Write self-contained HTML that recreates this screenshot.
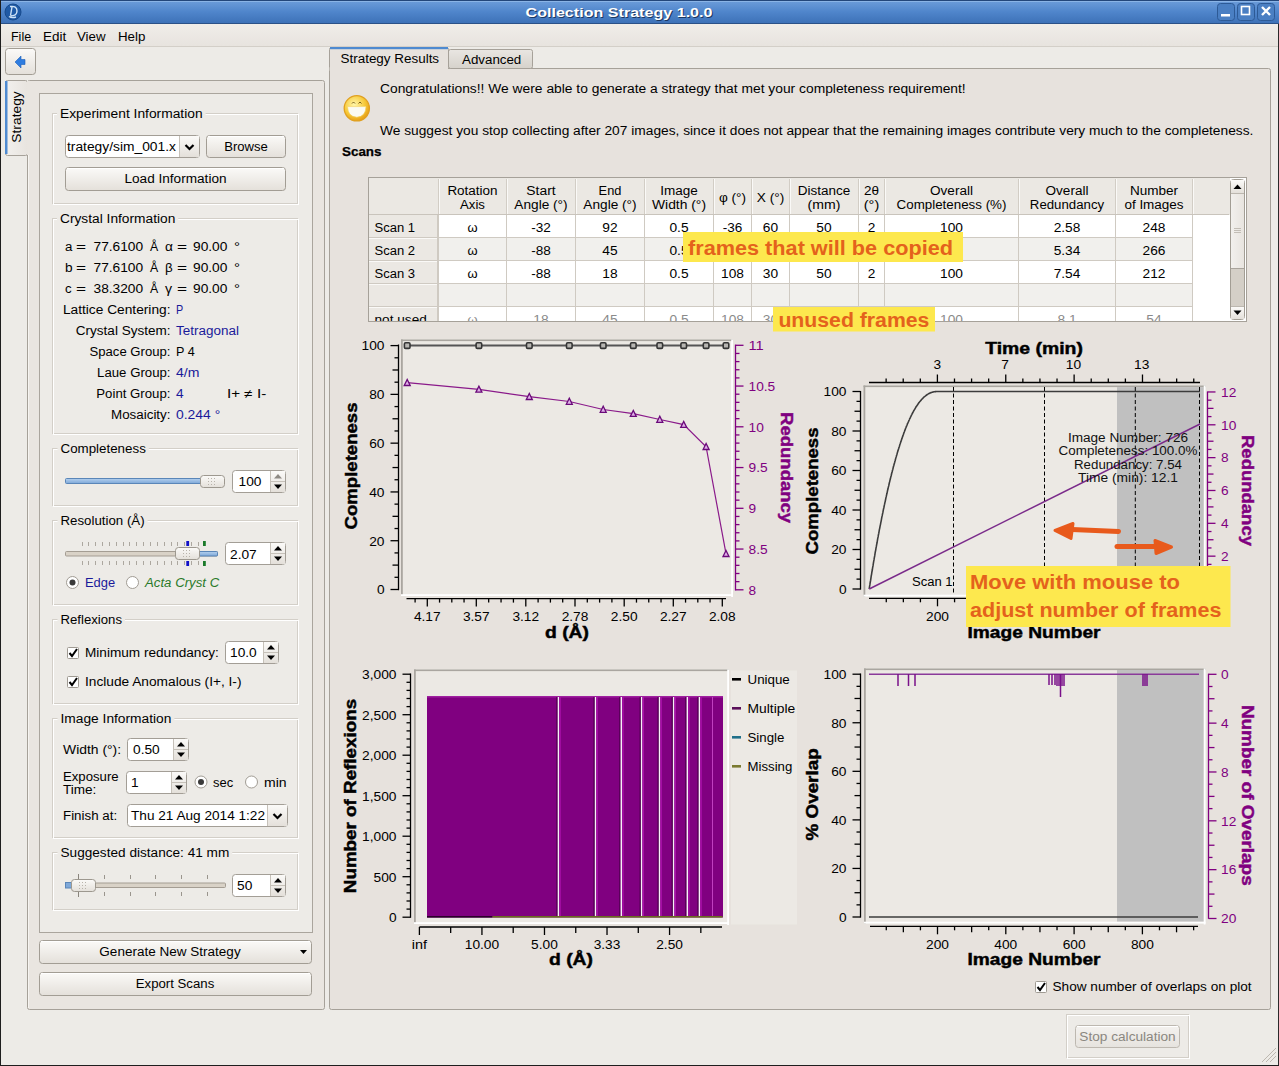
<!DOCTYPE html>
<html><head><meta charset="utf-8"><style>
html,body{margin:0;padding:0;background:#edebe7;overflow:hidden}
svg{display:block}
svg text{font-family:"Liberation Sans",sans-serif;white-space:pre}
</style></head><body>
<svg width="1279" height="1066" viewBox="0 0 1279 1066">
<defs>
<linearGradient id="gTitle" x1="0" y1="0" x2="0" y2="1"><stop offset="0" stop-color="#6e9edb"/><stop offset="0.5" stop-color="#4f85cb"/><stop offset="1" stop-color="#3c70b6"/></linearGradient>
<linearGradient id="gBtn" x1="0" y1="0" x2="0" y2="1"><stop offset="0" stop-color="#fbfaf8"/><stop offset="1" stop-color="#e4e0da"/></linearGradient>
<linearGradient id="gBtnDis" x1="0" y1="0" x2="0" y2="1"><stop offset="0" stop-color="#f4f2ef"/><stop offset="1" stop-color="#e6e3de"/></linearGradient>
<linearGradient id="gMenu" x1="0" y1="0" x2="0" y2="1"><stop offset="0" stop-color="#f0ede9"/><stop offset="1" stop-color="#e7e3de"/></linearGradient>
<linearGradient id="gTab" x1="0" y1="0" x2="0" y2="1"><stop offset="0" stop-color="#e9e6e2"/><stop offset="1" stop-color="#d6d2cb"/></linearGradient>
<linearGradient id="gTabV" x1="0" y1="0" x2="1" y2="0"><stop offset="0" stop-color="#f2f0ed"/><stop offset="1" stop-color="#e8e4df"/></linearGradient>
<linearGradient id="gBlue" x1="0" y1="0" x2="0" y2="1"><stop offset="0" stop-color="#b4d0ee"/><stop offset="1" stop-color="#7ea8d8"/></linearGradient>
<radialGradient id="gSmile" cx="0.4" cy="0.35" r="0.7"><stop offset="0" stop-color="#fff6a8"/><stop offset="0.6" stop-color="#f7c938"/><stop offset="1" stop-color="#e59a10"/></radialGradient>
</defs>
<rect x="0" y="0" width="1279" height="1066" fill="#edebe7" />
<rect x="0" y="0" width="1279" height="24" fill="url(#gTitle)" />
<line x1="0" y1="0.5" x2="1279" y2="0.5" stroke="#23467a" stroke-width="1" />
<line x1="0" y1="23.5" x2="1279" y2="23.5" stroke="#2b5187" stroke-width="1" />
<line x1="0" y1="1.5" x2="1279" y2="1.5" stroke="#8ab4e6" stroke-width="1" />
<circle cx="13" cy="12" r="8" fill="#1f5aa6" stroke="#184a8c" stroke-width="1"/>
<path d="M10 6.5 Q17 5.5 17 11 Q17 16 10.5 16 M12 7 L10.5 15.5 M9 16.5 Q12 18.5 16 17" fill="none" stroke="#cfe3f7" stroke-width="1.4"/>
<text x="620" y="18" font-size="13.50" font-weight="700" text-anchor="middle" fill="#1b3760" textLength="187" lengthAdjust="spacingAndGlyphs" >Collection Strategy 1.0.0</text>
<text x="619" y="17" font-size="13.50" font-weight="700" text-anchor="middle" fill="#ffffff" textLength="187" lengthAdjust="spacingAndGlyphs" >Collection Strategy 1.0.0</text>
<rect x="1217.5" y="3.5" width="17" height="17" fill="#4a7fc3" stroke="#2d5a96" stroke-width="1" rx="3" />
<rect x="1221" y="14" width="9" height="2.5" fill="#ffffff" />
<rect x="1237.5" y="3.5" width="17" height="17" fill="#4a7fc3" stroke="#2d5a96" stroke-width="1" rx="3" />
<rect x="1241.5" y="6.5" width="8" height="8" fill="none" stroke="#ffffff" stroke-width="1.6" />
<rect x="1257.5" y="3.5" width="17" height="17" fill="#4a7fc3" stroke="#2d5a96" stroke-width="1" rx="3" />
<path d="M1262 7 L1270 15 M1270 7 L1262 15" stroke="#ffffff" stroke-width="2.4"/>
<line x1="0.5" y1="0" x2="0.5" y2="1066" stroke="#1e1e1e" stroke-width="1" />
<line x1="1278.5" y1="24" x2="1278.5" y2="1066" stroke="#2a2a2a" stroke-width="1" />
<line x1="0" y1="1065.5" x2="1279" y2="1065.5" stroke="#1e1e1e" stroke-width="1" />
<rect x="1" y="24" width="1277" height="23" fill="url(#gMenu)" />
<line x1="1" y1="46.5" x2="1278" y2="46.5" stroke="#d3cfc8" stroke-width="1" />
<text x="11" y="41" font-size="12.48" fill="#000" textLength="20.1" lengthAdjust="spacingAndGlyphs" >File</text>
<text x="43" y="41" font-size="12.48" fill="#000" textLength="23.2" lengthAdjust="spacingAndGlyphs" >Edit</text>
<text x="77" y="41" font-size="12.48" fill="#000" textLength="28.5" lengthAdjust="spacingAndGlyphs" >View</text>
<text x="118" y="41" font-size="12.48" fill="#000" textLength="27.4" lengthAdjust="spacingAndGlyphs" >Help</text>
<rect x="5.5" y="48.5" width="30" height="26" fill="url(#gBtn)" stroke="#a29d94" stroke-width="1" rx="3" />
<path d="M15 62 L21 56 L21 59.5 L25 59.5 L25 64.5 L21 64.5 L21 68 Z" fill="#2f7de0" stroke="#1d5fb8" stroke-width="0.6"/>
<rect x="27.5" y="80.5" width="297" height="929" fill="#e9e5e0" stroke="#a6a199" stroke-width="1" rx="2" />
<line x1="28.5" y1="82" x2="28.5" y2="1008" stroke="#f6f4f1" stroke-width="1" />
<rect x="5.5" y="80.5" width="22" height="75" fill="url(#gTabV)" stroke="#a6a199" stroke-width="1" rx="2" />
<rect x="27" y="81" width="2" height="74" fill="#e9e5e0" />
<rect x="5" y="81" width="2.5" height="73" fill="#4e8ad0" />
<text x="21" y="117" font-size="12.48" text-anchor="middle" fill="#000" textLength="51.4" lengthAdjust="spacingAndGlyphs" transform="rotate(-90 21 117)" >Strategy</text>
<rect x="39.5" y="93.5" width="273" height="839" fill="#edebe7" stroke="#aaa59d" stroke-width="1" />
<rect x="52.5" y="113.5" width="245" height="90" fill="none" stroke="#d3cfc8" stroke-width="1" />
<rect x="53.5" y="114.5" width="245" height="90" fill="none" stroke="#ffffff" stroke-width="1" />
<rect x="57" y="111" width="148.6" height="5" fill="#edebe7"/>
<text x="60" y="118" font-size="12.48" fill="#000" textLength="142.6" lengthAdjust="spacingAndGlyphs" >Experiment Information</text>
<rect x="65.5" y="135.5" width="134" height="22" fill="#ffffff" stroke="#a39e96" stroke-width="1" rx="3" />
<rect x="179.5" y="136" width="19.5" height="21" fill="url(#gBtn)" />
<line x1="179.5" y1="136" x2="179.5" y2="157" stroke="#c6c1b9" stroke-width="1" />
<path d="M185.5 145.0 L189.5 149.0 L193.5 145.0" fill="none" stroke="#000" stroke-width="2.2"/>
<text x="67" y="151" font-size="12.48" fill="#000" textLength="108.9" lengthAdjust="spacingAndGlyphs" >trategy/sim_001.x</text>
<rect x="206.5" y="135.5" width="79" height="22" fill="url(#gBtn)" stroke="#a29d94" stroke-width="1" rx="3" />
<line x1="208" y1="136.5" x2="284" y2="136.5" stroke="#ffffff" stroke-width="1" />
<text x="246.0" y="151" font-size="12.48" text-anchor="middle" fill="#000" textLength="43.7" lengthAdjust="spacingAndGlyphs" >Browse</text>
<rect x="65.5" y="167.5" width="220" height="23" fill="url(#gBtn)" stroke="#a29d94" stroke-width="1" rx="3" />
<line x1="67" y1="168.5" x2="284" y2="168.5" stroke="#ffffff" stroke-width="1" />
<text x="175.5" y="183" font-size="12.48" text-anchor="middle" fill="#000" textLength="102.1" lengthAdjust="spacingAndGlyphs" >Load Information</text>
<rect x="52.5" y="218.5" width="245" height="215" fill="none" stroke="#d3cfc8" stroke-width="1" />
<rect x="53.5" y="219.5" width="245" height="215" fill="none" stroke="#ffffff" stroke-width="1" />
<rect x="57" y="216" width="121.3" height="5" fill="#edebe7"/>
<text x="60" y="222.5" font-size="12.48" fill="#000" textLength="115.3" lengthAdjust="spacingAndGlyphs" >Crystal Information</text>
<text x="65" y="250.5" font-size="12.48" fill="#000" textLength="7.4" lengthAdjust="spacingAndGlyphs" >a</text>
<text x="76" y="250.5" font-size="12.48" fill="#000" textLength="10.1" lengthAdjust="spacingAndGlyphs" >=</text>
<text x="93.5" y="250.5" font-size="12.48" fill="#000" textLength="49.6" lengthAdjust="spacingAndGlyphs" >77.6100</text>
<text x="150" y="250.5" font-size="12.48" fill="#000" textLength="8.2" lengthAdjust="spacingAndGlyphs" >Å</text>
<text x="165" y="250.5" font-size="12.48" fill="#000" textLength="7.9" lengthAdjust="spacingAndGlyphs" >α</text>
<text x="177" y="250.5" font-size="12.48" fill="#000" textLength="10.1" lengthAdjust="spacingAndGlyphs" >=</text>
<text x="193" y="250.5" font-size="12.48" fill="#000" textLength="34.4" lengthAdjust="spacingAndGlyphs" >90.00</text>
<text x="234" y="250.5" font-size="12.48" fill="#000" textLength="6.0" lengthAdjust="spacingAndGlyphs" >°</text>
<text x="65" y="271.5" font-size="12.48" fill="#000" textLength="7.6" lengthAdjust="spacingAndGlyphs" >b</text>
<text x="76" y="271.5" font-size="12.48" fill="#000" textLength="10.1" lengthAdjust="spacingAndGlyphs" >=</text>
<text x="93.5" y="271.5" font-size="12.48" fill="#000" textLength="49.6" lengthAdjust="spacingAndGlyphs" >77.6100</text>
<text x="150" y="271.5" font-size="12.48" fill="#000" textLength="8.2" lengthAdjust="spacingAndGlyphs" >Å</text>
<text x="165" y="271.5" font-size="12.48" fill="#000" textLength="7.7" lengthAdjust="spacingAndGlyphs" >β</text>
<text x="177" y="271.5" font-size="12.48" fill="#000" textLength="10.1" lengthAdjust="spacingAndGlyphs" >=</text>
<text x="193" y="271.5" font-size="12.48" fill="#000" textLength="34.4" lengthAdjust="spacingAndGlyphs" >90.00</text>
<text x="234" y="271.5" font-size="12.48" fill="#000" textLength="6.0" lengthAdjust="spacingAndGlyphs" >°</text>
<text x="65" y="292.5" font-size="12.48" fill="#000" textLength="6.6" lengthAdjust="spacingAndGlyphs" >c</text>
<text x="76" y="292.5" font-size="12.48" fill="#000" textLength="10.1" lengthAdjust="spacingAndGlyphs" >=</text>
<text x="93.5" y="292.5" font-size="12.48" fill="#000" textLength="49.6" lengthAdjust="spacingAndGlyphs" >38.3200</text>
<text x="150" y="292.5" font-size="12.48" fill="#000" textLength="8.2" lengthAdjust="spacingAndGlyphs" >Å</text>
<text x="165" y="292.5" font-size="12.48" fill="#000" textLength="7.1" lengthAdjust="spacingAndGlyphs" >γ</text>
<text x="177" y="292.5" font-size="12.48" fill="#000" textLength="10.1" lengthAdjust="spacingAndGlyphs" >=</text>
<text x="193" y="292.5" font-size="12.48" fill="#000" textLength="34.4" lengthAdjust="spacingAndGlyphs" >90.00</text>
<text x="234" y="292.5" font-size="12.48" fill="#000" textLength="6.0" lengthAdjust="spacingAndGlyphs" >°</text>
<text x="170.5" y="313.5" font-size="12.48" text-anchor="end" fill="#000" textLength="107.6" lengthAdjust="spacingAndGlyphs" >Lattice Centering:</text>
<text x="176" y="313.5" font-size="12.48" fill="#1a1a9a" textLength="7.2" lengthAdjust="spacingAndGlyphs" >P</text>
<text x="170.5" y="334.5" font-size="12.48" text-anchor="end" fill="#000" textLength="94.7" lengthAdjust="spacingAndGlyphs" >Crystal System:</text>
<text x="176" y="334.5" font-size="12.48" fill="#1a1a9a" textLength="62.9" lengthAdjust="spacingAndGlyphs" >Tetragonal</text>
<text x="170.5" y="355.5" font-size="12.48" text-anchor="end" fill="#000" textLength="81.0" lengthAdjust="spacingAndGlyphs" >Space Group:</text>
<text x="176" y="355.5" font-size="12.48" fill="#000" textLength="18.7" lengthAdjust="spacingAndGlyphs" >P 4</text>
<text x="170.5" y="376.5" font-size="12.48" text-anchor="end" fill="#000" textLength="73.4" lengthAdjust="spacingAndGlyphs" >Laue Group:</text>
<text x="176" y="376.5" font-size="12.48" fill="#1a1a9a" textLength="23.4" lengthAdjust="spacingAndGlyphs" >4/m</text>
<text x="170.5" y="397.5" font-size="12.48" text-anchor="end" fill="#000" textLength="74.2" lengthAdjust="spacingAndGlyphs" >Point Group:</text>
<text x="176" y="397.5" font-size="12.48" fill="#1a1a9a" textLength="7.6" lengthAdjust="spacingAndGlyphs" >4</text>
<text x="170.5" y="418.5" font-size="12.48" text-anchor="end" fill="#000" textLength="59.5" lengthAdjust="spacingAndGlyphs" >Mosaicity:</text>
<text x="176" y="418.5" font-size="12.48" fill="#1a1a9a" textLength="44.2" lengthAdjust="spacingAndGlyphs" >0.244 °</text>
<text x="227" y="397.5" font-size="12.48" fill="#000" textLength="39.2" lengthAdjust="spacingAndGlyphs" >I+ ≠ I-</text>
<rect x="52.5" y="448.5" width="245" height="57" fill="none" stroke="#d3cfc8" stroke-width="1" />
<rect x="53.5" y="449.5" width="245" height="57" fill="none" stroke="#ffffff" stroke-width="1" />
<rect x="57.5" y="446" width="91.3" height="5" fill="#edebe7"/>
<text x="60.5" y="452.7" font-size="12.48" fill="#000" textLength="85.3" lengthAdjust="spacingAndGlyphs" >Completeness</text>
<rect x="65.5" y="478.5" width="158" height="5" fill="url(#gBlue)" stroke="#5a86b8" stroke-width="1" rx="1" />
<rect x="200.5" y="475.5" width="24" height="12" fill="url(#gBtn)" stroke="#9d988f" stroke-width="1" rx="3" />
<g fill="#b8b3ab"><rect x="208" y="478" width="1" height="1"/><rect x="208" y="481" width="1" height="1"/><rect x="208" y="484" width="1" height="1"/><rect x="211" y="478" width="1" height="1"/><rect x="211" y="481" width="1" height="1"/><rect x="211" y="484" width="1" height="1"/><rect x="214" y="478" width="1" height="1"/><rect x="214" y="481" width="1" height="1"/><rect x="214" y="484" width="1" height="1"/></g>
<rect x="232.5" y="470.5" width="53" height="22" fill="#ffffff" stroke="#a39e96" stroke-width="1" rx="3" />
<rect x="270.5" y="471" width="14.5" height="21" fill="url(#gBtn)" />
<line x1="270.5" y1="471" x2="270.5" y2="492" stroke="#c6c1b9" stroke-width="1" />
<line x1="271" y1="481.5" x2="285" y2="481.5" stroke="#c6c1b9" stroke-width="1" />
<path d="M274.0 478.5 L282.0 478.5 L278.0 474.0 Z" fill="#8e8a84"/>
<path d="M274.0 484.5 L282.0 484.5 L278.0 489.0 Z" fill="#000"/>
<text x="238.5" y="486" font-size="12.48" fill="#000" textLength="22.9" lengthAdjust="spacingAndGlyphs" >100</text>
<rect x="52.5" y="520.5" width="245" height="84" fill="none" stroke="#d3cfc8" stroke-width="1" />
<rect x="53.5" y="521.5" width="245" height="84" fill="none" stroke="#ffffff" stroke-width="1" />
<rect x="57.5" y="518" width="90.1" height="5" fill="#edebe7"/>
<text x="60.5" y="524.5" font-size="12.48" fill="#000" textLength="84.1" lengthAdjust="spacingAndGlyphs" >Resolution (Å)</text>
<line x1="82.5" y1="542" x2="82.5" y2="546" stroke="#aca79f" stroke-width="1" />
<line x1="82.5" y1="561" x2="82.5" y2="565" stroke="#aca79f" stroke-width="1" />
<line x1="88.5" y1="542" x2="88.5" y2="546" stroke="#aca79f" stroke-width="1" />
<line x1="88.5" y1="561" x2="88.5" y2="565" stroke="#aca79f" stroke-width="1" />
<line x1="95.5" y1="542" x2="95.5" y2="546" stroke="#aca79f" stroke-width="1" />
<line x1="95.5" y1="561" x2="95.5" y2="565" stroke="#aca79f" stroke-width="1" />
<line x1="102.5" y1="542" x2="102.5" y2="546" stroke="#aca79f" stroke-width="1" />
<line x1="102.5" y1="561" x2="102.5" y2="565" stroke="#aca79f" stroke-width="1" />
<line x1="109.5" y1="542" x2="109.5" y2="546" stroke="#aca79f" stroke-width="1" />
<line x1="109.5" y1="561" x2="109.5" y2="565" stroke="#aca79f" stroke-width="1" />
<line x1="116.5" y1="542" x2="116.5" y2="546" stroke="#aca79f" stroke-width="1" />
<line x1="116.5" y1="561" x2="116.5" y2="565" stroke="#aca79f" stroke-width="1" />
<line x1="123.5" y1="542" x2="123.5" y2="546" stroke="#aca79f" stroke-width="1" />
<line x1="123.5" y1="561" x2="123.5" y2="565" stroke="#aca79f" stroke-width="1" />
<line x1="129.5" y1="542" x2="129.5" y2="546" stroke="#aca79f" stroke-width="1" />
<line x1="129.5" y1="561" x2="129.5" y2="565" stroke="#aca79f" stroke-width="1" />
<line x1="136.5" y1="542" x2="136.5" y2="546" stroke="#aca79f" stroke-width="1" />
<line x1="136.5" y1="561" x2="136.5" y2="565" stroke="#aca79f" stroke-width="1" />
<line x1="143.5" y1="542" x2="143.5" y2="546" stroke="#aca79f" stroke-width="1" />
<line x1="143.5" y1="561" x2="143.5" y2="565" stroke="#aca79f" stroke-width="1" />
<line x1="150.5" y1="542" x2="150.5" y2="546" stroke="#aca79f" stroke-width="1" />
<line x1="150.5" y1="561" x2="150.5" y2="565" stroke="#aca79f" stroke-width="1" />
<line x1="157.5" y1="542" x2="157.5" y2="546" stroke="#aca79f" stroke-width="1" />
<line x1="157.5" y1="561" x2="157.5" y2="565" stroke="#aca79f" stroke-width="1" />
<line x1="164.5" y1="542" x2="164.5" y2="546" stroke="#aca79f" stroke-width="1" />
<line x1="164.5" y1="561" x2="164.5" y2="565" stroke="#aca79f" stroke-width="1" />
<line x1="171.5" y1="542" x2="171.5" y2="546" stroke="#aca79f" stroke-width="1" />
<line x1="171.5" y1="561" x2="171.5" y2="565" stroke="#aca79f" stroke-width="1" />
<line x1="177.5" y1="542" x2="177.5" y2="546" stroke="#aca79f" stroke-width="1" />
<line x1="177.5" y1="561" x2="177.5" y2="565" stroke="#aca79f" stroke-width="1" />
<line x1="184.5" y1="542" x2="184.5" y2="546" stroke="#aca79f" stroke-width="1" />
<line x1="184.5" y1="561" x2="184.5" y2="565" stroke="#aca79f" stroke-width="1" />
<line x1="191.5" y1="542" x2="191.5" y2="546" stroke="#aca79f" stroke-width="1" />
<line x1="191.5" y1="561" x2="191.5" y2="565" stroke="#aca79f" stroke-width="1" />
<line x1="198.5" y1="542" x2="198.5" y2="546" stroke="#aca79f" stroke-width="1" />
<line x1="198.5" y1="561" x2="198.5" y2="565" stroke="#aca79f" stroke-width="1" />
<rect x="65.5" y="551.5" width="152" height="4.5" fill="#d9d2c7" stroke="#a49d93" stroke-width="1" rx="1" />
<rect x="196" y="551.5" width="21.5" height="4.5" fill="url(#gBlue)" stroke="#5a86b8" stroke-width="1" rx="1" />
<rect x="186.3" y="541" width="2.8" height="5" fill="#1010c8" />
<rect x="186.3" y="561" width="2.8" height="5" fill="#1010c8" />
<rect x="203" y="541" width="2.8" height="5" fill="#1a7a2a" />
<rect x="203" y="561" width="2.8" height="5" fill="#1a7a2a" />
<rect x="175.5" y="547.5" width="24" height="12" fill="url(#gBtn)" stroke="#9d988f" stroke-width="1" rx="3" />
<g fill="#b8b3ab"><rect x="183" y="550" width="1" height="1"/><rect x="183" y="553" width="1" height="1"/><rect x="183" y="556" width="1" height="1"/><rect x="186" y="550" width="1" height="1"/><rect x="186" y="553" width="1" height="1"/><rect x="186" y="556" width="1" height="1"/><rect x="189" y="550" width="1" height="1"/><rect x="189" y="553" width="1" height="1"/><rect x="189" y="556" width="1" height="1"/></g>
<rect x="225.5" y="542.5" width="60" height="22" fill="#ffffff" stroke="#a39e96" stroke-width="1" rx="3" />
<rect x="270.5" y="543" width="14.5" height="21" fill="url(#gBtn)" />
<line x1="270.5" y1="543" x2="270.5" y2="564" stroke="#c6c1b9" stroke-width="1" />
<line x1="271" y1="553.5" x2="285" y2="553.5" stroke="#c6c1b9" stroke-width="1" />
<path d="M274.0 550.5 L282.0 550.5 L278.0 546.0 Z" fill="#000"/>
<path d="M274.0 556.5 L282.0 556.5 L278.0 561.0 Z" fill="#000"/>
<text x="230" y="558.5" font-size="12.48" fill="#000" textLength="26.7" lengthAdjust="spacingAndGlyphs" >2.07</text>
<circle cx="72.5" cy="582.5" r="6" fill="#ffffff" stroke="#a19c94" stroke-width="1"/>
<circle cx="72.5" cy="582.5" r="3" fill="#3a3a3a"/>
<text x="85" y="587" font-size="12.48" fill="#1a1a9a" textLength="30.2" lengthAdjust="spacingAndGlyphs" >Edge</text>
<circle cx="132.5" cy="582.5" r="6" fill="#ffffff" stroke="#a19c94" stroke-width="1"/>
<text x="145" y="587" font-size="12.48" font-style="italic" fill="#2a7a2a" textLength="74.2" lengthAdjust="spacingAndGlyphs" >Acta Cryst C</text>
<rect x="52.5" y="619.5" width="245" height="84" fill="none" stroke="#d3cfc8" stroke-width="1" />
<rect x="53.5" y="620.5" width="245" height="84" fill="none" stroke="#ffffff" stroke-width="1" />
<rect x="57.5" y="617" width="67.5" height="5" fill="#edebe7"/>
<text x="60.5" y="623.5" font-size="12.48" fill="#000" textLength="61.5" lengthAdjust="spacingAndGlyphs" >Reflexions</text>
<rect x="67.5" y="647.5" width="11" height="11" fill="#ffffff" stroke="#9f9a92" stroke-width="1" rx="1" />
<path d="M69.5 653 L72 656 L77 649" fill="none" stroke="#000" stroke-width="2"/>
<text x="85" y="657" font-size="12.48" fill="#000" textLength="133.8" lengthAdjust="spacingAndGlyphs" >Minimum redundancy:</text>
<rect x="225.5" y="641.5" width="53" height="22" fill="#ffffff" stroke="#a39e96" stroke-width="1" rx="3" />
<rect x="263.5" y="642" width="14.5" height="21" fill="url(#gBtn)" />
<line x1="263.5" y1="642" x2="263.5" y2="663" stroke="#c6c1b9" stroke-width="1" />
<line x1="264" y1="652.5" x2="278" y2="652.5" stroke="#c6c1b9" stroke-width="1" />
<path d="M267.0 649.5 L275.0 649.5 L271.0 645.0 Z" fill="#000"/>
<path d="M267.0 655.5 L275.0 655.5 L271.0 660.0 Z" fill="#000"/>
<text x="230" y="657" font-size="12.48" fill="#000" textLength="26.7" lengthAdjust="spacingAndGlyphs" >10.0</text>
<rect x="67.5" y="676.5" width="11" height="11" fill="#ffffff" stroke="#9f9a92" stroke-width="1" rx="1" />
<path d="M69.5 682 L72 685 L77 678" fill="none" stroke="#000" stroke-width="2"/>
<text x="85" y="686" font-size="12.48" fill="#000" textLength="156.5" lengthAdjust="spacingAndGlyphs" >Include Anomalous (I+, I-)</text>
<rect x="52.5" y="718.5" width="245" height="119" fill="none" stroke="#d3cfc8" stroke-width="1" />
<rect x="53.5" y="719.5" width="245" height="119" fill="none" stroke="#ffffff" stroke-width="1" />
<rect x="57.5" y="716" width="116.9" height="5" fill="#edebe7"/>
<text x="60.5" y="722.5" font-size="12.48" fill="#000" textLength="110.9" lengthAdjust="spacingAndGlyphs" >Image Information</text>
<text x="63" y="753.5" font-size="12.48" fill="#000" textLength="58.1" lengthAdjust="spacingAndGlyphs" >Width (°):</text>
<rect x="127.5" y="738.5" width="61" height="22" fill="#ffffff" stroke="#a39e96" stroke-width="1" rx="3" />
<rect x="173.5" y="739" width="14.5" height="21" fill="url(#gBtn)" />
<line x1="173.5" y1="739" x2="173.5" y2="760" stroke="#c6c1b9" stroke-width="1" />
<line x1="174" y1="749.5" x2="188" y2="749.5" stroke="#c6c1b9" stroke-width="1" />
<path d="M177.0 746.5 L185.0 746.5 L181.0 742.0 Z" fill="#000"/>
<path d="M177.0 752.5 L185.0 752.5 L181.0 757.0 Z" fill="#000"/>
<text x="133" y="754" font-size="12.48" fill="#000" textLength="26.7" lengthAdjust="spacingAndGlyphs" >0.50</text>
<text x="63" y="780.5" font-size="12.48" fill="#000" textLength="55.6" lengthAdjust="spacingAndGlyphs" >Exposure</text>
<text x="63" y="793.5" font-size="12.48" fill="#000" textLength="33.4" lengthAdjust="spacingAndGlyphs" >Time:</text>
<rect x="126.5" y="771.5" width="60" height="22" fill="#ffffff" stroke="#a39e96" stroke-width="1" rx="3" />
<rect x="171.5" y="772" width="14.5" height="21" fill="url(#gBtn)" />
<line x1="171.5" y1="772" x2="171.5" y2="793" stroke="#c6c1b9" stroke-width="1" />
<line x1="172" y1="782.5" x2="186" y2="782.5" stroke="#c6c1b9" stroke-width="1" />
<path d="M175.0 779.5 L183.0 779.5 L179.0 775.0 Z" fill="#000"/>
<path d="M175.0 785.5 L183.0 785.5 L179.0 790.0 Z" fill="#000"/>
<text x="131" y="787" font-size="12.48" fill="#000" textLength="7.6" lengthAdjust="spacingAndGlyphs" >1</text>
<circle cx="201" cy="782" r="6" fill="#ffffff" stroke="#a19c94" stroke-width="1"/>
<circle cx="201" cy="782" r="3" fill="#3a3a3a"/>
<text x="213" y="787" font-size="12.48" fill="#000" textLength="20.2" lengthAdjust="spacingAndGlyphs" >sec</text>
<circle cx="251.5" cy="782" r="6" fill="#ffffff" stroke="#a19c94" stroke-width="1"/>
<text x="264" y="787" font-size="12.48" fill="#000" textLength="22.6" lengthAdjust="spacingAndGlyphs" >min</text>
<text x="63" y="819.5" font-size="12.48" fill="#000" textLength="54.1" lengthAdjust="spacingAndGlyphs" >Finish at:</text>
<rect x="127.5" y="804.5" width="160" height="22" fill="#ffffff" stroke="#a39e96" stroke-width="1" rx="3" />
<rect x="267.5" y="805" width="19.5" height="21" fill="url(#gBtn)" />
<line x1="267.5" y1="805" x2="267.5" y2="826" stroke="#c6c1b9" stroke-width="1" />
<path d="M273.5 814.0 L277.5 818.0 L281.5 814.0" fill="none" stroke="#000" stroke-width="2.2"/>
<text x="131" y="820" font-size="12.48" fill="#000" textLength="134.0" lengthAdjust="spacingAndGlyphs" >Thu 21 Aug 2014 1:22</text>
<rect x="52.5" y="852.5" width="245" height="57" fill="none" stroke="#d3cfc8" stroke-width="1" />
<rect x="53.5" y="853.5" width="245" height="57" fill="none" stroke="#ffffff" stroke-width="1" />
<rect x="57.5" y="850" width="174.8" height="5" fill="#edebe7"/>
<text x="60.5" y="857" font-size="12.48" fill="#000" textLength="168.8" lengthAdjust="spacingAndGlyphs" >Suggested distance: 41 mm</text>
<line x1="104.5" y1="875" x2="104.5" y2="879" stroke="#9a958d" stroke-width="1" />
<line x1="104.5" y1="892" x2="104.5" y2="896" stroke="#9a958d" stroke-width="1" />
<line x1="130.5" y1="875" x2="130.5" y2="879" stroke="#9a958d" stroke-width="1" />
<line x1="130.5" y1="892" x2="130.5" y2="896" stroke="#9a958d" stroke-width="1" />
<line x1="155.5" y1="875" x2="155.5" y2="879" stroke="#9a958d" stroke-width="1" />
<line x1="155.5" y1="892" x2="155.5" y2="896" stroke="#9a958d" stroke-width="1" />
<line x1="181.5" y1="875" x2="181.5" y2="879" stroke="#9a958d" stroke-width="1" />
<line x1="181.5" y1="892" x2="181.5" y2="896" stroke="#9a958d" stroke-width="1" />
<line x1="207.5" y1="875" x2="207.5" y2="879" stroke="#9a958d" stroke-width="1" />
<line x1="207.5" y1="892" x2="207.5" y2="896" stroke="#9a958d" stroke-width="1" />
<line x1="78.5" y1="874" x2="78.5" y2="897" stroke="#8a857d" stroke-width="1" />
<rect x="65.5" y="883" width="160" height="4.5" fill="#d9d2c7" stroke="#a49d93" stroke-width="1" rx="1" />
<rect x="65.5" y="882.5" width="8" height="5.5" fill="#7ea8d8" stroke="#5a86b8" stroke-width="1" />
<rect x="71.5" y="879.5" width="24" height="12" fill="url(#gBtn)" stroke="#9d988f" stroke-width="1" rx="3" />
<g fill="#b8b3ab"><rect x="79" y="882" width="1" height="1"/><rect x="79" y="885" width="1" height="1"/><rect x="79" y="888" width="1" height="1"/><rect x="82" y="882" width="1" height="1"/><rect x="82" y="885" width="1" height="1"/><rect x="82" y="888" width="1" height="1"/><rect x="85" y="882" width="1" height="1"/><rect x="85" y="885" width="1" height="1"/><rect x="85" y="888" width="1" height="1"/></g>
<rect x="232.5" y="874.5" width="53" height="22" fill="#ffffff" stroke="#a39e96" stroke-width="1" rx="3" />
<rect x="270.5" y="875" width="14.5" height="21" fill="url(#gBtn)" />
<line x1="270.5" y1="875" x2="270.5" y2="896" stroke="#c6c1b9" stroke-width="1" />
<line x1="271" y1="885.5" x2="285" y2="885.5" stroke="#c6c1b9" stroke-width="1" />
<path d="M274.0 882.5 L282.0 882.5 L278.0 878.0 Z" fill="#000"/>
<path d="M274.0 888.5 L282.0 888.5 L278.0 893.0 Z" fill="#000"/>
<text x="237" y="890" font-size="12.48" fill="#000" textLength="15.3" lengthAdjust="spacingAndGlyphs" >50</text>
<line x1="39" y1="932.5" x2="313" y2="932.5" stroke="#aaa59d" stroke-width="1" />
<rect x="39.5" y="940.5" width="272" height="23" fill="url(#gBtn)" stroke="#a29d94" stroke-width="1" rx="3" />
<line x1="41" y1="941.5" x2="310" y2="941.5" stroke="#ffffff" stroke-width="1" />
<text x="170" y="956" font-size="12.48" text-anchor="middle" fill="#000" textLength="141.3" lengthAdjust="spacingAndGlyphs" >Generate New Strategy</text>
<path d="M300 950 L307 950 L303.5 954 Z" fill="#000"/>
<rect x="39.5" y="972.5" width="272" height="23" fill="url(#gBtn)" stroke="#a29d94" stroke-width="1" rx="3" />
<line x1="41" y1="973.5" x2="310" y2="973.5" stroke="#ffffff" stroke-width="1" />
<text x="175" y="988" font-size="12.48" text-anchor="middle" fill="#000" textLength="78.5" lengthAdjust="spacingAndGlyphs" >Export Scans</text>
<rect x="329.5" y="68.5" width="941" height="941" fill="#e7e2dd" stroke="#a6a199" stroke-width="1" rx="2" />
<rect x="448.5" y="49.5" width="84" height="19" fill="url(#gTab)" stroke="#a6a199" stroke-width="1" rx="2" />
<text x="462" y="63.5" font-size="12.48" fill="#000" textLength="59.3" lengthAdjust="spacingAndGlyphs" >Advanced</text>
<rect x="329.5" y="47.5" width="119" height="22" fill="#e7e2dd" stroke="#a6a199" stroke-width="1" rx="2" />
<rect x="330" y="60" width="118" height="10" fill="#e7e2dd" />
<rect x="330" y="47" width="118" height="2.2" fill="#4e8ad0" />
<text x="340.5" y="63" font-size="12.48" fill="#000" textLength="98.6" lengthAdjust="spacingAndGlyphs" >Strategy Results</text>
<circle cx="356.8" cy="108.3" r="12.6" fill="url(#gSmile)" stroke="#e0a020" stroke-width="1.3"/>
<path d="M347.5 106.6 L366 106.6 Q365.5 117 356.8 117.2 Q348 117 347.5 106.6 Z" fill="#fbfbf2" stroke="#f4d060" stroke-width="0.6"/>
<path d="M352 103.5 L353.5 102 L355 103.5 M358.5 103.5 L360 102 L361.5 103.5" fill="none" stroke="#6a5010" stroke-width="0.9"/>
<text x="380" y="93" font-size="12.48" fill="#000" textLength="585.7" lengthAdjust="spacingAndGlyphs" >Congratulations!! We were able to generate a strategy that met your completeness requirement!</text>
<text x="380" y="135" font-size="12.48" fill="#000" textLength="873.4" lengthAdjust="spacingAndGlyphs" >We suggest you stop collecting after 207 images, since it does not appear that the remaining images contribute very much to the completeness.</text>
<text stroke="#000" stroke-width="0.25" x="342" y="155.5" font-size="12.48" font-weight="700" fill="#000" textLength="39.5" lengthAdjust="spacingAndGlyphs" >Scans</text>
<rect x="368.5" y="177.5" width="878" height="144" fill="#ffffff" stroke="#a6a199" stroke-width="1" />
<rect x="369" y="178" width="861" height="37" fill="#ebe8e3" />
<rect x="438" y="215" width="754" height="23" fill="#ffffff" />
<rect x="369" y="215" width="69" height="23" fill="#ebe8e3" />
<rect x="438" y="238" width="754" height="23" fill="#f1f0ed" />
<rect x="369" y="238" width="69" height="23" fill="#ebe8e3" />
<rect x="438" y="261" width="754" height="23" fill="#ffffff" />
<rect x="369" y="261" width="69" height="23" fill="#ebe8e3" />
<rect x="438" y="284" width="754" height="23" fill="#f1f0ed" />
<rect x="369" y="284" width="69" height="23" fill="#ebe8e3" />
<rect x="438" y="307" width="754" height="14" fill="#ffffff" />
<rect x="369" y="307" width="69" height="14" fill="#ebe8e3" />
<line x1="438.5" y1="179" x2="438.5" y2="214" stroke="#d2cdc5" stroke-width="1" />
<line x1="439.5" y1="179" x2="439.5" y2="214" stroke="#faf9f7" stroke-width="1" />
<line x1="506.5" y1="179" x2="506.5" y2="214" stroke="#d2cdc5" stroke-width="1" />
<line x1="507.5" y1="179" x2="507.5" y2="214" stroke="#faf9f7" stroke-width="1" />
<line x1="575.5" y1="179" x2="575.5" y2="214" stroke="#d2cdc5" stroke-width="1" />
<line x1="576.5" y1="179" x2="576.5" y2="214" stroke="#faf9f7" stroke-width="1" />
<line x1="644.5" y1="179" x2="644.5" y2="214" stroke="#d2cdc5" stroke-width="1" />
<line x1="645.5" y1="179" x2="645.5" y2="214" stroke="#faf9f7" stroke-width="1" />
<line x1="713.5" y1="179" x2="713.5" y2="214" stroke="#d2cdc5" stroke-width="1" />
<line x1="714.5" y1="179" x2="714.5" y2="214" stroke="#faf9f7" stroke-width="1" />
<line x1="751.5" y1="179" x2="751.5" y2="214" stroke="#d2cdc5" stroke-width="1" />
<line x1="752.5" y1="179" x2="752.5" y2="214" stroke="#faf9f7" stroke-width="1" />
<line x1="789.5" y1="179" x2="789.5" y2="214" stroke="#d2cdc5" stroke-width="1" />
<line x1="790.5" y1="179" x2="790.5" y2="214" stroke="#faf9f7" stroke-width="1" />
<line x1="858.5" y1="179" x2="858.5" y2="214" stroke="#d2cdc5" stroke-width="1" />
<line x1="859.5" y1="179" x2="859.5" y2="214" stroke="#faf9f7" stroke-width="1" />
<line x1="884.5" y1="179" x2="884.5" y2="214" stroke="#d2cdc5" stroke-width="1" />
<line x1="885.5" y1="179" x2="885.5" y2="214" stroke="#faf9f7" stroke-width="1" />
<line x1="1018.5" y1="179" x2="1018.5" y2="214" stroke="#d2cdc5" stroke-width="1" />
<line x1="1019.5" y1="179" x2="1019.5" y2="214" stroke="#faf9f7" stroke-width="1" />
<line x1="1115.5" y1="179" x2="1115.5" y2="214" stroke="#d2cdc5" stroke-width="1" />
<line x1="1116.5" y1="179" x2="1116.5" y2="214" stroke="#faf9f7" stroke-width="1" />
<line x1="1192.5" y1="179" x2="1192.5" y2="214" stroke="#d2cdc5" stroke-width="1" />
<line x1="1193.5" y1="179" x2="1193.5" y2="214" stroke="#faf9f7" stroke-width="1" />
<line x1="369" y1="214.5" x2="1229" y2="214.5" stroke="#c9c4bc" stroke-width="1" />
<line x1="369" y1="237.5" x2="438" y2="237.5" stroke="#cfcac2" stroke-width="1" />
<line x1="369" y1="238.5" x2="438" y2="238.5" stroke="#faf9f7" stroke-width="1" />
<line x1="369" y1="260.5" x2="438" y2="260.5" stroke="#cfcac2" stroke-width="1" />
<line x1="369" y1="261.5" x2="438" y2="261.5" stroke="#faf9f7" stroke-width="1" />
<line x1="369" y1="283.5" x2="438" y2="283.5" stroke="#cfcac2" stroke-width="1" />
<line x1="369" y1="284.5" x2="438" y2="284.5" stroke="#faf9f7" stroke-width="1" />
<line x1="369" y1="306.5" x2="438" y2="306.5" stroke="#cfcac2" stroke-width="1" />
<line x1="369" y1="307.5" x2="438" y2="307.5" stroke="#faf9f7" stroke-width="1" />
<line x1="437.5" y1="215" x2="437.5" y2="321" stroke="#cfcac2" stroke-width="1" />
<line x1="438" y1="237.5" x2="1192" y2="237.5" stroke="#cfcac2" stroke-width="1" />
<line x1="438" y1="260.5" x2="1192" y2="260.5" stroke="#cfcac2" stroke-width="1" />
<line x1="438" y1="283.5" x2="1192" y2="283.5" stroke="#cfcac2" stroke-width="1" />
<line x1="438" y1="306.5" x2="1192" y2="306.5" stroke="#cfcac2" stroke-width="1" />
<line x1="438.5" y1="215" x2="438.5" y2="321" stroke="#cfcac2" stroke-width="1" />
<line x1="506.5" y1="215" x2="506.5" y2="321" stroke="#cfcac2" stroke-width="1" />
<line x1="575.5" y1="215" x2="575.5" y2="321" stroke="#cfcac2" stroke-width="1" />
<line x1="644.5" y1="215" x2="644.5" y2="321" stroke="#cfcac2" stroke-width="1" />
<line x1="713.5" y1="215" x2="713.5" y2="321" stroke="#cfcac2" stroke-width="1" />
<line x1="751.5" y1="215" x2="751.5" y2="321" stroke="#cfcac2" stroke-width="1" />
<line x1="789.5" y1="215" x2="789.5" y2="321" stroke="#cfcac2" stroke-width="1" />
<line x1="858.5" y1="215" x2="858.5" y2="321" stroke="#cfcac2" stroke-width="1" />
<line x1="884.5" y1="215" x2="884.5" y2="321" stroke="#cfcac2" stroke-width="1" />
<line x1="1018.5" y1="215" x2="1018.5" y2="321" stroke="#cfcac2" stroke-width="1" />
<line x1="1115.5" y1="215" x2="1115.5" y2="321" stroke="#cfcac2" stroke-width="1" />
<line x1="1192.5" y1="215" x2="1192.5" y2="321" stroke="#cfcac2" stroke-width="1" />
<text x="472.5" y="195" font-size="12.48" text-anchor="middle" fill="#000" textLength="50.2" lengthAdjust="spacingAndGlyphs" >Rotation</text>
<text x="472.5" y="209" font-size="12.48" text-anchor="middle" fill="#000" textLength="24.9" lengthAdjust="spacingAndGlyphs" >Axis</text>
<text x="541.0" y="195" font-size="12.48" text-anchor="middle" fill="#000" textLength="29.3" lengthAdjust="spacingAndGlyphs" >Start</text>
<text x="541.0" y="209" font-size="12.48" text-anchor="middle" fill="#000" textLength="53.3" lengthAdjust="spacingAndGlyphs" >Angle (°)</text>
<text x="610.0" y="195" font-size="12.48" text-anchor="middle" fill="#000" textLength="22.8" lengthAdjust="spacingAndGlyphs" >End</text>
<text x="610.0" y="209" font-size="12.48" text-anchor="middle" fill="#000" textLength="53.3" lengthAdjust="spacingAndGlyphs" >Angle (°)</text>
<text x="679.0" y="195" font-size="12.48" text-anchor="middle" fill="#000" textLength="37.6" lengthAdjust="spacingAndGlyphs" >Image</text>
<text x="679.0" y="209" font-size="12.48" text-anchor="middle" fill="#000" textLength="54.0" lengthAdjust="spacingAndGlyphs" >Width (°)</text>
<text x="732.5" y="202" font-size="12.48" text-anchor="middle" fill="#000" textLength="27.1" lengthAdjust="spacingAndGlyphs" >φ (°)</text>
<text x="770.5" y="202" font-size="12.48" text-anchor="middle" fill="#000" textLength="27.4" lengthAdjust="spacingAndGlyphs" >X (°)</text>
<text x="824.0" y="195" font-size="12.48" text-anchor="middle" fill="#000" textLength="52.5" lengthAdjust="spacingAndGlyphs" >Distance</text>
<text x="824.0" y="209" font-size="12.48" text-anchor="middle" fill="#000" textLength="32.8" lengthAdjust="spacingAndGlyphs" >(mm)</text>
<text x="871.5" y="195" font-size="12.48" text-anchor="middle" fill="#000" textLength="15.0" lengthAdjust="spacingAndGlyphs" >2θ</text>
<text x="871.5" y="209" font-size="12.48" text-anchor="middle" fill="#000" textLength="15.4" lengthAdjust="spacingAndGlyphs" >(°)</text>
<text x="951.5" y="195" font-size="12.48" text-anchor="middle" fill="#000" textLength="42.9" lengthAdjust="spacingAndGlyphs" >Overall</text>
<text x="951.5" y="209" font-size="12.48" text-anchor="middle" fill="#000" textLength="109.9" lengthAdjust="spacingAndGlyphs" >Completeness (%)</text>
<text x="1067.0" y="195" font-size="12.48" text-anchor="middle" fill="#000" textLength="42.9" lengthAdjust="spacingAndGlyphs" >Overall</text>
<text x="1067.0" y="209" font-size="12.48" text-anchor="middle" fill="#000" textLength="74.3" lengthAdjust="spacingAndGlyphs" >Redundancy</text>
<text x="1154.0" y="195" font-size="12.48" text-anchor="middle" fill="#000" textLength="48.2" lengthAdjust="spacingAndGlyphs" >Number</text>
<text x="1154.0" y="209" font-size="12.48" text-anchor="middle" fill="#000" textLength="59.2" lengthAdjust="spacingAndGlyphs" >of Images</text>
<text x="374.5" y="232" font-size="12.48" fill="#000" textLength="40.6" lengthAdjust="spacingAndGlyphs" >Scan 1</text>
<text x="472.5" y="232" font-size="12.48" text-anchor="middle" fill="#000" textLength="10.1" lengthAdjust="spacingAndGlyphs" >ω</text>
<text x="541.0" y="232" font-size="12.48" text-anchor="middle" fill="#000" textLength="19.6" lengthAdjust="spacingAndGlyphs" >-32</text>
<text x="610.0" y="232" font-size="12.48" text-anchor="middle" fill="#000" textLength="15.3" lengthAdjust="spacingAndGlyphs" >92</text>
<text x="679.0" y="232" font-size="12.48" text-anchor="middle" fill="#000" textLength="19.1" lengthAdjust="spacingAndGlyphs" >0.5</text>
<text x="732.5" y="232" font-size="12.48" text-anchor="middle" fill="#000" textLength="19.6" lengthAdjust="spacingAndGlyphs" >-36</text>
<text x="770.5" y="232" font-size="12.48" text-anchor="middle" fill="#000" textLength="15.3" lengthAdjust="spacingAndGlyphs" >60</text>
<text x="824.0" y="232" font-size="12.48" text-anchor="middle" fill="#000" textLength="15.3" lengthAdjust="spacingAndGlyphs" >50</text>
<text x="871.5" y="232" font-size="12.48" text-anchor="middle" fill="#000" textLength="7.6" lengthAdjust="spacingAndGlyphs" >2</text>
<text x="951.5" y="232" font-size="12.48" text-anchor="middle" fill="#000" textLength="22.9" lengthAdjust="spacingAndGlyphs" >100</text>
<text x="1067.0" y="232" font-size="12.48" text-anchor="middle" fill="#000" textLength="26.7" lengthAdjust="spacingAndGlyphs" >2.58</text>
<text x="1154.0" y="232" font-size="12.48" text-anchor="middle" fill="#000" textLength="22.9" lengthAdjust="spacingAndGlyphs" >248</text>
<text x="374.5" y="255" font-size="12.48" fill="#000" textLength="40.6" lengthAdjust="spacingAndGlyphs" >Scan 2</text>
<text x="472.5" y="255" font-size="12.48" text-anchor="middle" fill="#000" textLength="10.1" lengthAdjust="spacingAndGlyphs" >ω</text>
<text x="541.0" y="255" font-size="12.48" text-anchor="middle" fill="#000" textLength="19.6" lengthAdjust="spacingAndGlyphs" >-88</text>
<text x="610.0" y="255" font-size="12.48" text-anchor="middle" fill="#000" textLength="15.3" lengthAdjust="spacingAndGlyphs" >45</text>
<text x="679.0" y="255" font-size="12.48" text-anchor="middle" fill="#000" textLength="19.1" lengthAdjust="spacingAndGlyphs" >0.5</text>
<text x="732.5" y="255" font-size="12.48" text-anchor="middle" fill="#000" textLength="22.9" lengthAdjust="spacingAndGlyphs" >108</text>
<text x="770.5" y="255" font-size="12.48" text-anchor="middle" fill="#000" textLength="15.3" lengthAdjust="spacingAndGlyphs" >30</text>
<text x="824.0" y="255" font-size="12.48" text-anchor="middle" fill="#000" textLength="15.3" lengthAdjust="spacingAndGlyphs" >50</text>
<text x="871.5" y="255" font-size="12.48" text-anchor="middle" fill="#000" textLength="7.6" lengthAdjust="spacingAndGlyphs" >2</text>
<text x="951.5" y="255" font-size="12.48" text-anchor="middle" fill="#000" textLength="22.9" lengthAdjust="spacingAndGlyphs" >100</text>
<text x="1067.0" y="255" font-size="12.48" text-anchor="middle" fill="#000" textLength="26.7" lengthAdjust="spacingAndGlyphs" >5.34</text>
<text x="1154.0" y="255" font-size="12.48" text-anchor="middle" fill="#000" textLength="22.9" lengthAdjust="spacingAndGlyphs" >266</text>
<text x="374.5" y="278" font-size="12.48" fill="#000" textLength="40.6" lengthAdjust="spacingAndGlyphs" >Scan 3</text>
<text x="472.5" y="278" font-size="12.48" text-anchor="middle" fill="#000" textLength="10.1" lengthAdjust="spacingAndGlyphs" >ω</text>
<text x="541.0" y="278" font-size="12.48" text-anchor="middle" fill="#000" textLength="19.6" lengthAdjust="spacingAndGlyphs" >-88</text>
<text x="610.0" y="278" font-size="12.48" text-anchor="middle" fill="#000" textLength="15.3" lengthAdjust="spacingAndGlyphs" >18</text>
<text x="679.0" y="278" font-size="12.48" text-anchor="middle" fill="#000" textLength="19.1" lengthAdjust="spacingAndGlyphs" >0.5</text>
<text x="732.5" y="278" font-size="12.48" text-anchor="middle" fill="#000" textLength="22.9" lengthAdjust="spacingAndGlyphs" >108</text>
<text x="770.5" y="278" font-size="12.48" text-anchor="middle" fill="#000" textLength="15.3" lengthAdjust="spacingAndGlyphs" >30</text>
<text x="824.0" y="278" font-size="12.48" text-anchor="middle" fill="#000" textLength="15.3" lengthAdjust="spacingAndGlyphs" >50</text>
<text x="871.5" y="278" font-size="12.48" text-anchor="middle" fill="#000" textLength="7.6" lengthAdjust="spacingAndGlyphs" >2</text>
<text x="951.5" y="278" font-size="12.48" text-anchor="middle" fill="#000" textLength="22.9" lengthAdjust="spacingAndGlyphs" >100</text>
<text x="1067.0" y="278" font-size="12.48" text-anchor="middle" fill="#000" textLength="26.7" lengthAdjust="spacingAndGlyphs" >7.54</text>
<text x="1154.0" y="278" font-size="12.48" text-anchor="middle" fill="#000" textLength="22.9" lengthAdjust="spacingAndGlyphs" >212</text>
<clipPath id="tclip"><rect x="369" y="307" width="860" height="14"/></clipPath>
<g clip-path="url(#tclip)">
<text x="374.5" y="324" font-size="12.48" fill="#000" textLength="52.3" lengthAdjust="spacingAndGlyphs" >not used</text>
<text x="472.5" y="324" font-size="12.48" text-anchor="middle" fill="#8a8a8a" textLength="10.1" lengthAdjust="spacingAndGlyphs" >ω</text>
<text x="541.0" y="324" font-size="12.48" text-anchor="middle" fill="#8a8a8a" textLength="15.3" lengthAdjust="spacingAndGlyphs" >18</text>
<text x="610.0" y="324" font-size="12.48" text-anchor="middle" fill="#8a8a8a" textLength="15.3" lengthAdjust="spacingAndGlyphs" >45</text>
<text x="679.0" y="324" font-size="12.48" text-anchor="middle" fill="#8a8a8a" textLength="19.1" lengthAdjust="spacingAndGlyphs" >0.5</text>
<text x="732.5" y="324" font-size="12.48" text-anchor="middle" fill="#8a8a8a" textLength="22.9" lengthAdjust="spacingAndGlyphs" >108</text>
<text x="770.5" y="324" font-size="12.48" text-anchor="middle" fill="#8a8a8a" textLength="15.3" lengthAdjust="spacingAndGlyphs" >30</text>
<text x="824.0" y="324" font-size="12.48" text-anchor="middle" fill="#8a8a8a" textLength="15.3" lengthAdjust="spacingAndGlyphs" >50</text>
<text x="871.5" y="324" font-size="12.48" text-anchor="middle" fill="#8a8a8a" textLength="7.6" lengthAdjust="spacingAndGlyphs" >2</text>
<text x="951.5" y="324" font-size="12.48" text-anchor="middle" fill="#8a8a8a" textLength="22.9" lengthAdjust="spacingAndGlyphs" >100</text>
<text x="1067.0" y="324" font-size="12.48" text-anchor="middle" fill="#8a8a8a" textLength="19.1" lengthAdjust="spacingAndGlyphs" >8.1</text>
<text x="1154.0" y="324" font-size="12.48" text-anchor="middle" fill="#8a8a8a" textLength="15.3" lengthAdjust="spacingAndGlyphs" >54</text>
</g>
<rect x="1230.5" y="179.5" width="14" height="140" fill="#d4cfc7" stroke="#a29d94" stroke-width="1" rx="3" />
<rect x="1231" y="193" width="13" height="75" fill="url(#gTabV)" />
<line x1="1231" y1="193.5" x2="1244" y2="193.5" stroke="#bcb7af" stroke-width="1" />
<line x1="1231" y1="268.5" x2="1244" y2="268.5" stroke="#a9a49c" stroke-width="1" />
<line x1="1231" y1="306.5" x2="1244" y2="306.5" stroke="#bcb7af" stroke-width="1" />
<rect x="1231" y="180" width="13" height="13" fill="url(#gBtn)" />
<rect x="1231" y="307" width="13" height="12" fill="url(#gBtn)" />
<path d="M1233.5 189 L1241.5 189 L1237.5 184.5 Z" fill="#000"/>
<path d="M1233.5 310.5 L1241.5 310.5 L1237.5 315 Z" fill="#000"/>
<line x1="1234" y1="228.5" x2="1241" y2="228.5" stroke="#c2bdb5" stroke-width="1" />
<line x1="1234" y1="230.5" x2="1241" y2="230.5" stroke="#c2bdb5" stroke-width="1" />
<line x1="1234" y1="232.5" x2="1241" y2="232.5" stroke="#c2bdb5" stroke-width="1" />
<rect x="401" y="339.5" width="332" height="256.5" fill="#ece9e4" />
<rect x="401" y="339.5" width="332" height="1.6" fill="#aaa6a0" />
<rect x="401" y="339.5" width="1.8" height="256.5" fill="#aaa6a0" />
<rect x="731.2" y="339.5" width="1.8" height="257.5" fill="#ffffff" />
<rect x="401" y="594.2" width="332" height="1.8" fill="#ffffff" />
<line x1="398.5" y1="344.5" x2="398.5" y2="590.2" stroke="#000" stroke-width="1.3" />
<line x1="398.5" y1="589.5" x2="390.5" y2="589.5" stroke="#000" stroke-width="1.3" />
<line x1="398.5" y1="577.305" x2="394.5" y2="577.305" stroke="#000" stroke-width="1.3" />
<line x1="398.5" y1="565.11" x2="392.5" y2="565.11" stroke="#000" stroke-width="1.3" />
<line x1="398.5" y1="552.915" x2="394.5" y2="552.915" stroke="#000" stroke-width="1.3" />
<line x1="398.5" y1="540.72" x2="390.5" y2="540.72" stroke="#000" stroke-width="1.3" />
<line x1="398.5" y1="528.525" x2="394.5" y2="528.525" stroke="#000" stroke-width="1.3" />
<line x1="398.5" y1="516.33" x2="392.5" y2="516.33" stroke="#000" stroke-width="1.3" />
<line x1="398.5" y1="504.135" x2="394.5" y2="504.135" stroke="#000" stroke-width="1.3" />
<line x1="398.5" y1="491.94" x2="390.5" y2="491.94" stroke="#000" stroke-width="1.3" />
<line x1="398.5" y1="479.745" x2="394.5" y2="479.745" stroke="#000" stroke-width="1.3" />
<line x1="398.5" y1="467.55" x2="392.5" y2="467.55" stroke="#000" stroke-width="1.3" />
<line x1="398.5" y1="455.355" x2="394.5" y2="455.355" stroke="#000" stroke-width="1.3" />
<line x1="398.5" y1="443.15999999999997" x2="390.5" y2="443.15999999999997" stroke="#000" stroke-width="1.3" />
<line x1="398.5" y1="430.96500000000003" x2="394.5" y2="430.96500000000003" stroke="#000" stroke-width="1.3" />
<line x1="398.5" y1="418.77" x2="392.5" y2="418.77" stroke="#000" stroke-width="1.3" />
<line x1="398.5" y1="406.575" x2="394.5" y2="406.575" stroke="#000" stroke-width="1.3" />
<line x1="398.5" y1="394.38" x2="390.5" y2="394.38" stroke="#000" stroke-width="1.3" />
<line x1="398.5" y1="382.185" x2="394.5" y2="382.185" stroke="#000" stroke-width="1.3" />
<line x1="398.5" y1="369.99" x2="392.5" y2="369.99" stroke="#000" stroke-width="1.3" />
<line x1="398.5" y1="357.79499999999996" x2="394.5" y2="357.79499999999996" stroke="#000" stroke-width="1.3" />
<line x1="398.5" y1="345.6" x2="390.5" y2="345.6" stroke="#000" stroke-width="1.3" />
<text x="384.5" y="594.3" font-size="12.48" text-anchor="end" fill="#000" textLength="7.6" lengthAdjust="spacingAndGlyphs" >0</text>
<text x="384.5" y="545.52" font-size="12.48" text-anchor="end" fill="#000" textLength="15.3" lengthAdjust="spacingAndGlyphs" >20</text>
<text x="384.5" y="496.74" font-size="12.48" text-anchor="end" fill="#000" textLength="15.3" lengthAdjust="spacingAndGlyphs" >40</text>
<text x="384.5" y="447.96" font-size="12.48" text-anchor="end" fill="#000" textLength="15.3" lengthAdjust="spacingAndGlyphs" >60</text>
<text x="384.5" y="399.18" font-size="12.48" text-anchor="end" fill="#000" textLength="15.3" lengthAdjust="spacingAndGlyphs" >80</text>
<text x="384.5" y="350.40000000000003" font-size="12.48" text-anchor="end" fill="#000" textLength="22.9" lengthAdjust="spacingAndGlyphs" >100</text>
<line x1="735.5" y1="344.6" x2="735.5" y2="590.5" stroke="#800080" stroke-width="1.3" />
<line x1="735.5" y1="589.8" x2="743.5" y2="589.8" stroke="#800080" stroke-width="1.3" />
<line x1="735.5" y1="581.65" x2="739.5" y2="581.65" stroke="#800080" stroke-width="1.3" />
<line x1="735.5" y1="573.5" x2="739.5" y2="573.5" stroke="#800080" stroke-width="1.3" />
<line x1="735.5" y1="565.3499999999999" x2="739.5" y2="565.3499999999999" stroke="#800080" stroke-width="1.3" />
<line x1="735.5" y1="557.1999999999999" x2="739.5" y2="557.1999999999999" stroke="#800080" stroke-width="1.3" />
<line x1="735.5" y1="549.05" x2="743.5" y2="549.05" stroke="#800080" stroke-width="1.3" />
<line x1="735.5" y1="540.9" x2="739.5" y2="540.9" stroke="#800080" stroke-width="1.3" />
<line x1="735.5" y1="532.75" x2="739.5" y2="532.75" stroke="#800080" stroke-width="1.3" />
<line x1="735.5" y1="524.5999999999999" x2="739.5" y2="524.5999999999999" stroke="#800080" stroke-width="1.3" />
<line x1="735.5" y1="516.4499999999999" x2="739.5" y2="516.4499999999999" stroke="#800080" stroke-width="1.3" />
<line x1="735.5" y1="508.29999999999995" x2="743.5" y2="508.29999999999995" stroke="#800080" stroke-width="1.3" />
<line x1="735.5" y1="500.15" x2="739.5" y2="500.15" stroke="#800080" stroke-width="1.3" />
<line x1="735.5" y1="492.0" x2="739.5" y2="492.0" stroke="#800080" stroke-width="1.3" />
<line x1="735.5" y1="483.8499999999999" x2="739.5" y2="483.8499999999999" stroke="#800080" stroke-width="1.3" />
<line x1="735.5" y1="475.69999999999993" x2="739.5" y2="475.69999999999993" stroke="#800080" stroke-width="1.3" />
<line x1="735.5" y1="467.54999999999995" x2="743.5" y2="467.54999999999995" stroke="#800080" stroke-width="1.3" />
<line x1="735.5" y1="459.4" x2="739.5" y2="459.4" stroke="#800080" stroke-width="1.3" />
<line x1="735.5" y1="451.25" x2="739.5" y2="451.25" stroke="#800080" stroke-width="1.3" />
<line x1="735.5" y1="443.0999999999999" x2="739.5" y2="443.0999999999999" stroke="#800080" stroke-width="1.3" />
<line x1="735.5" y1="434.94999999999993" x2="739.5" y2="434.94999999999993" stroke="#800080" stroke-width="1.3" />
<line x1="735.5" y1="426.79999999999995" x2="743.5" y2="426.79999999999995" stroke="#800080" stroke-width="1.3" />
<line x1="735.5" y1="418.65" x2="739.5" y2="418.65" stroke="#800080" stroke-width="1.3" />
<line x1="735.5" y1="410.5" x2="739.5" y2="410.5" stroke="#800080" stroke-width="1.3" />
<line x1="735.5" y1="402.3499999999999" x2="739.5" y2="402.3499999999999" stroke="#800080" stroke-width="1.3" />
<line x1="735.5" y1="394.19999999999993" x2="739.5" y2="394.19999999999993" stroke="#800080" stroke-width="1.3" />
<line x1="735.5" y1="386.04999999999995" x2="743.5" y2="386.04999999999995" stroke="#800080" stroke-width="1.3" />
<line x1="735.5" y1="377.9" x2="739.5" y2="377.9" stroke="#800080" stroke-width="1.3" />
<line x1="735.5" y1="369.75" x2="739.5" y2="369.75" stroke="#800080" stroke-width="1.3" />
<line x1="735.5" y1="361.5999999999999" x2="739.5" y2="361.5999999999999" stroke="#800080" stroke-width="1.3" />
<line x1="735.5" y1="353.44999999999993" x2="739.5" y2="353.44999999999993" stroke="#800080" stroke-width="1.3" />
<line x1="735.5" y1="345.29999999999995" x2="743.5" y2="345.29999999999995" stroke="#800080" stroke-width="1.3" />
<text x="748.5" y="594.5999999999999" font-size="12.48" fill="#800080" textLength="7.6" lengthAdjust="spacingAndGlyphs" >8</text>
<text x="748.5" y="553.8499999999999" font-size="12.48" fill="#800080" textLength="19.1" lengthAdjust="spacingAndGlyphs" >8.5</text>
<text x="748.5" y="513.0999999999999" font-size="12.48" fill="#800080" textLength="7.6" lengthAdjust="spacingAndGlyphs" >9</text>
<text x="748.5" y="472.34999999999997" font-size="12.48" fill="#800080" textLength="19.1" lengthAdjust="spacingAndGlyphs" >9.5</text>
<text x="748.5" y="431.59999999999997" font-size="12.48" fill="#800080" textLength="15.3" lengthAdjust="spacingAndGlyphs" >10</text>
<text x="748.5" y="390.84999999999997" font-size="12.48" fill="#800080" textLength="26.7" lengthAdjust="spacingAndGlyphs" >10.5</text>
<text x="748.5" y="350.09999999999997" font-size="12.48" fill="#800080" textLength="15.3" lengthAdjust="spacingAndGlyphs" >11</text>
<line x1="406.5" y1="598.6" x2="726" y2="598.6" stroke="#000" stroke-width="1.3" />
<line x1="415.1" y1="598.6" x2="415.1" y2="602.6" stroke="#000" stroke-width="1.3" />
<line x1="427.3" y1="598.6" x2="427.3" y2="606.6" stroke="#000" stroke-width="1.3" />
<line x1="439.55" y1="598.6" x2="439.55" y2="602.6" stroke="#000" stroke-width="1.3" />
<line x1="451.8" y1="598.6" x2="451.8" y2="602.6" stroke="#000" stroke-width="1.3" />
<line x1="464.05" y1="598.6" x2="464.05" y2="602.6" stroke="#000" stroke-width="1.3" />
<line x1="476.3" y1="598.6" x2="476.3" y2="606.6" stroke="#000" stroke-width="1.3" />
<line x1="488.675" y1="598.6" x2="488.675" y2="602.6" stroke="#000" stroke-width="1.3" />
<line x1="501.04999999999995" y1="598.6" x2="501.04999999999995" y2="602.6" stroke="#000" stroke-width="1.3" />
<line x1="513.425" y1="598.6" x2="513.425" y2="602.6" stroke="#000" stroke-width="1.3" />
<line x1="525.8" y1="598.6" x2="525.8" y2="606.6" stroke="#000" stroke-width="1.3" />
<line x1="538.0999999999999" y1="598.6" x2="538.0999999999999" y2="602.6" stroke="#000" stroke-width="1.3" />
<line x1="550.4" y1="598.6" x2="550.4" y2="602.6" stroke="#000" stroke-width="1.3" />
<line x1="562.7" y1="598.6" x2="562.7" y2="602.6" stroke="#000" stroke-width="1.3" />
<line x1="575" y1="598.6" x2="575" y2="606.6" stroke="#000" stroke-width="1.3" />
<line x1="587.3" y1="598.6" x2="587.3" y2="602.6" stroke="#000" stroke-width="1.3" />
<line x1="599.6" y1="598.6" x2="599.6" y2="602.6" stroke="#000" stroke-width="1.3" />
<line x1="611.9000000000001" y1="598.6" x2="611.9000000000001" y2="602.6" stroke="#000" stroke-width="1.3" />
<line x1="624.2" y1="598.6" x2="624.2" y2="606.6" stroke="#000" stroke-width="1.3" />
<line x1="636.475" y1="598.6" x2="636.475" y2="602.6" stroke="#000" stroke-width="1.3" />
<line x1="648.75" y1="598.6" x2="648.75" y2="602.6" stroke="#000" stroke-width="1.3" />
<line x1="661.025" y1="598.6" x2="661.025" y2="602.6" stroke="#000" stroke-width="1.3" />
<line x1="673.3" y1="598.6" x2="673.3" y2="606.6" stroke="#000" stroke-width="1.3" />
<line x1="685.55" y1="598.6" x2="685.55" y2="602.6" stroke="#000" stroke-width="1.3" />
<line x1="697.8" y1="598.6" x2="697.8" y2="602.6" stroke="#000" stroke-width="1.3" />
<line x1="710.05" y1="598.6" x2="710.05" y2="602.6" stroke="#000" stroke-width="1.3" />
<line x1="722.3" y1="598.6" x2="722.3" y2="606.6" stroke="#000" stroke-width="1.3" />
<text x="427.3" y="620.8" font-size="12.48" text-anchor="middle" fill="#000" textLength="26.7" lengthAdjust="spacingAndGlyphs" >4.17</text>
<text x="476.3" y="620.8" font-size="12.48" text-anchor="middle" fill="#000" textLength="26.7" lengthAdjust="spacingAndGlyphs" >3.57</text>
<text x="525.8" y="620.8" font-size="12.48" text-anchor="middle" fill="#000" textLength="26.7" lengthAdjust="spacingAndGlyphs" >3.12</text>
<text x="575" y="620.8" font-size="12.48" text-anchor="middle" fill="#000" textLength="26.7" lengthAdjust="spacingAndGlyphs" >2.78</text>
<text x="624.2" y="620.8" font-size="12.48" text-anchor="middle" fill="#000" textLength="26.7" lengthAdjust="spacingAndGlyphs" >2.50</text>
<text x="673.3" y="620.8" font-size="12.48" text-anchor="middle" fill="#000" textLength="26.7" lengthAdjust="spacingAndGlyphs" >2.27</text>
<text x="722.3" y="620.8" font-size="12.48" text-anchor="middle" fill="#000" textLength="26.7" lengthAdjust="spacingAndGlyphs" >2.08</text>
<text stroke="#000" stroke-width="0.45" x="567" y="637.5" font-size="16.64" font-weight="700" text-anchor="middle" fill="#000" textLength="44.0" lengthAdjust="spacingAndGlyphs" >d (Å)</text>
<text stroke="#000" stroke-width="0.45" x="357.3" y="466" font-size="16.64" font-weight="700" text-anchor="middle" fill="#000" textLength="127.0" lengthAdjust="spacingAndGlyphs" transform="rotate(-90 357.3 466)" >Completeness</text>
<text stroke="#800080" stroke-width="0.45" x="781" y="467.6" font-size="16.64" font-weight="700" text-anchor="middle" fill="#800080" textLength="111.0" lengthAdjust="spacingAndGlyphs" transform="rotate(90 781 467.6)" >Redundancy</text>
<line x1="407" y1="345.6" x2="726" y2="345.6" stroke="#555555" stroke-width="2" />
<rect x="404.4" y="342.8" width="5.6" height="5.6" fill="#b8b6b2" stroke="#353535" stroke-width="1.6" rx="1.2" />
<rect x="476.09999999999997" y="342.8" width="5.6" height="5.6" fill="#b8b6b2" stroke="#353535" stroke-width="1.6" rx="1.2" />
<rect x="526.5" y="342.8" width="5.6" height="5.6" fill="#b8b6b2" stroke="#353535" stroke-width="1.6" rx="1.2" />
<rect x="566.5" y="342.8" width="5.6" height="5.6" fill="#b8b6b2" stroke="#353535" stroke-width="1.6" rx="1.2" />
<rect x="600.4000000000001" y="342.8" width="5.6" height="5.6" fill="#b8b6b2" stroke="#353535" stroke-width="1.6" rx="1.2" />
<rect x="630.5" y="342.8" width="5.6" height="5.6" fill="#b8b6b2" stroke="#353535" stroke-width="1.6" rx="1.2" />
<rect x="657.0" y="342.8" width="5.6" height="5.6" fill="#b8b6b2" stroke="#353535" stroke-width="1.6" rx="1.2" />
<rect x="680.9000000000001" y="342.8" width="5.6" height="5.6" fill="#b8b6b2" stroke="#353535" stroke-width="1.6" rx="1.2" />
<rect x="703.3000000000001" y="342.8" width="5.6" height="5.6" fill="#b8b6b2" stroke="#353535" stroke-width="1.6" rx="1.2" />
<rect x="723.2" y="342.8" width="5.6" height="5.6" fill="#b8b6b2" stroke="#353535" stroke-width="1.6" rx="1.2" />
<polyline points="407.2,382.7 478.9,389.3 529.3,396.7 569.3,401.5 603.2,409.5 633.3,413.6 659.8,419.5 683.7,424.6 706.1,446.7 726,553.7" fill="none" stroke="#8a1a8a" stroke-width="1.2"/>
<path d="M404.2 385.5 L410.2 385.5 L407.2 379.5 Z" fill="#e0b0e8" stroke="#6a0a7a" stroke-width="1.3"/>
<path d="M475.9 392.1 L481.9 392.1 L478.9 386.1 Z" fill="#e0b0e8" stroke="#6a0a7a" stroke-width="1.3"/>
<path d="M526.3 399.5 L532.3 399.5 L529.3 393.5 Z" fill="#e0b0e8" stroke="#6a0a7a" stroke-width="1.3"/>
<path d="M566.3 404.3 L572.3 404.3 L569.3 398.3 Z" fill="#e0b0e8" stroke="#6a0a7a" stroke-width="1.3"/>
<path d="M600.2 412.3 L606.2 412.3 L603.2 406.3 Z" fill="#e0b0e8" stroke="#6a0a7a" stroke-width="1.3"/>
<path d="M630.3 416.40000000000003 L636.3 416.40000000000003 L633.3 410.40000000000003 Z" fill="#e0b0e8" stroke="#6a0a7a" stroke-width="1.3"/>
<path d="M656.8 422.3 L662.8 422.3 L659.8 416.3 Z" fill="#e0b0e8" stroke="#6a0a7a" stroke-width="1.3"/>
<path d="M680.7 427.40000000000003 L686.7 427.40000000000003 L683.7 421.40000000000003 Z" fill="#e0b0e8" stroke="#6a0a7a" stroke-width="1.3"/>
<path d="M703.1 449.5 L709.1 449.5 L706.1 443.5 Z" fill="#e0b0e8" stroke="#6a0a7a" stroke-width="1.3"/>
<path d="M723 556.5 L729 556.5 L726 550.5 Z" fill="#e0b0e8" stroke="#6a0a7a" stroke-width="1.3"/>
<rect x="863.5" y="385.5" width="342.0" height="211.0" fill="#ece9e4" />
<rect x="863.5" y="385.5" width="342.0" height="1.6" fill="#aaa6a0" />
<rect x="863.5" y="385.5" width="1.8" height="211.0" fill="#aaa6a0" />
<rect x="1203.7" y="385.5" width="1.8" height="212.0" fill="#ffffff" />
<rect x="863.5" y="594.7" width="342.0" height="1.8" fill="#ffffff" />
<rect x="1117" y="387.1" width="86.7" height="207.5" fill="#c0c0c0" />
<line x1="860.5" y1="391" x2="860.5" y2="589.6" stroke="#000" stroke-width="1.3" />
<line x1="860.5" y1="589.0" x2="852.5" y2="589.0" stroke="#000" stroke-width="1.3" />
<line x1="860.5" y1="579.125" x2="856.5" y2="579.125" stroke="#000" stroke-width="1.3" />
<line x1="860.5" y1="569.25" x2="854.5" y2="569.25" stroke="#000" stroke-width="1.3" />
<line x1="860.5" y1="559.375" x2="856.5" y2="559.375" stroke="#000" stroke-width="1.3" />
<line x1="860.5" y1="549.5" x2="852.5" y2="549.5" stroke="#000" stroke-width="1.3" />
<line x1="860.5" y1="539.625" x2="856.5" y2="539.625" stroke="#000" stroke-width="1.3" />
<line x1="860.5" y1="529.75" x2="854.5" y2="529.75" stroke="#000" stroke-width="1.3" />
<line x1="860.5" y1="519.875" x2="856.5" y2="519.875" stroke="#000" stroke-width="1.3" />
<line x1="860.5" y1="510.0" x2="852.5" y2="510.0" stroke="#000" stroke-width="1.3" />
<line x1="860.5" y1="500.125" x2="856.5" y2="500.125" stroke="#000" stroke-width="1.3" />
<line x1="860.5" y1="490.25" x2="854.5" y2="490.25" stroke="#000" stroke-width="1.3" />
<line x1="860.5" y1="480.375" x2="856.5" y2="480.375" stroke="#000" stroke-width="1.3" />
<line x1="860.5" y1="470.5" x2="852.5" y2="470.5" stroke="#000" stroke-width="1.3" />
<line x1="860.5" y1="460.625" x2="856.5" y2="460.625" stroke="#000" stroke-width="1.3" />
<line x1="860.5" y1="450.75" x2="854.5" y2="450.75" stroke="#000" stroke-width="1.3" />
<line x1="860.5" y1="440.875" x2="856.5" y2="440.875" stroke="#000" stroke-width="1.3" />
<line x1="860.5" y1="431.0" x2="852.5" y2="431.0" stroke="#000" stroke-width="1.3" />
<line x1="860.5" y1="421.125" x2="856.5" y2="421.125" stroke="#000" stroke-width="1.3" />
<line x1="860.5" y1="411.25" x2="854.5" y2="411.25" stroke="#000" stroke-width="1.3" />
<line x1="860.5" y1="401.375" x2="856.5" y2="401.375" stroke="#000" stroke-width="1.3" />
<line x1="860.5" y1="391.5" x2="852.5" y2="391.5" stroke="#000" stroke-width="1.3" />
<text x="846.5" y="593.8" font-size="12.48" text-anchor="end" fill="#000" textLength="7.6" lengthAdjust="spacingAndGlyphs" >0</text>
<text x="846.5" y="554.3" font-size="12.48" text-anchor="end" fill="#000" textLength="15.3" lengthAdjust="spacingAndGlyphs" >20</text>
<text x="846.5" y="514.8" font-size="12.48" text-anchor="end" fill="#000" textLength="15.3" lengthAdjust="spacingAndGlyphs" >40</text>
<text x="846.5" y="475.3" font-size="12.48" text-anchor="end" fill="#000" textLength="15.3" lengthAdjust="spacingAndGlyphs" >60</text>
<text x="846.5" y="435.8" font-size="12.48" text-anchor="end" fill="#000" textLength="15.3" lengthAdjust="spacingAndGlyphs" >80</text>
<text x="846.5" y="396.3" font-size="12.48" text-anchor="end" fill="#000" textLength="22.9" lengthAdjust="spacingAndGlyphs" >100</text>
<line x1="1207.5" y1="391.5" x2="1207.5" y2="589.6" stroke="#800080" stroke-width="1.3" />
<line x1="1207.5" y1="589.0" x2="1215.5" y2="589.0" stroke="#800080" stroke-width="1.3" />
<line x1="1207.5" y1="580.79" x2="1211.5" y2="580.79" stroke="#800080" stroke-width="1.3" />
<line x1="1207.5" y1="572.58" x2="1213.5" y2="572.58" stroke="#800080" stroke-width="1.3" />
<line x1="1207.5" y1="564.37" x2="1211.5" y2="564.37" stroke="#800080" stroke-width="1.3" />
<line x1="1207.5" y1="556.16" x2="1215.5" y2="556.16" stroke="#800080" stroke-width="1.3" />
<line x1="1207.5" y1="547.95" x2="1211.5" y2="547.95" stroke="#800080" stroke-width="1.3" />
<line x1="1207.5" y1="539.74" x2="1213.5" y2="539.74" stroke="#800080" stroke-width="1.3" />
<line x1="1207.5" y1="531.53" x2="1211.5" y2="531.53" stroke="#800080" stroke-width="1.3" />
<line x1="1207.5" y1="523.3199999999999" x2="1215.5" y2="523.3199999999999" stroke="#800080" stroke-width="1.3" />
<line x1="1207.5" y1="515.11" x2="1211.5" y2="515.11" stroke="#800080" stroke-width="1.3" />
<line x1="1207.5" y1="506.9" x2="1213.5" y2="506.9" stroke="#800080" stroke-width="1.3" />
<line x1="1207.5" y1="498.69" x2="1211.5" y2="498.69" stroke="#800080" stroke-width="1.3" />
<line x1="1207.5" y1="490.48" x2="1215.5" y2="490.48" stroke="#800080" stroke-width="1.3" />
<line x1="1207.5" y1="482.27" x2="1211.5" y2="482.27" stroke="#800080" stroke-width="1.3" />
<line x1="1207.5" y1="474.06" x2="1213.5" y2="474.06" stroke="#800080" stroke-width="1.3" />
<line x1="1207.5" y1="465.85" x2="1211.5" y2="465.85" stroke="#800080" stroke-width="1.3" />
<line x1="1207.5" y1="457.64" x2="1215.5" y2="457.64" stroke="#800080" stroke-width="1.3" />
<line x1="1207.5" y1="449.42999999999995" x2="1211.5" y2="449.42999999999995" stroke="#800080" stroke-width="1.3" />
<line x1="1207.5" y1="441.21999999999997" x2="1213.5" y2="441.21999999999997" stroke="#800080" stroke-width="1.3" />
<line x1="1207.5" y1="433.01" x2="1211.5" y2="433.01" stroke="#800080" stroke-width="1.3" />
<line x1="1207.5" y1="424.79999999999995" x2="1215.5" y2="424.79999999999995" stroke="#800080" stroke-width="1.3" />
<line x1="1207.5" y1="416.59" x2="1211.5" y2="416.59" stroke="#800080" stroke-width="1.3" />
<line x1="1207.5" y1="408.38" x2="1213.5" y2="408.38" stroke="#800080" stroke-width="1.3" />
<line x1="1207.5" y1="400.16999999999996" x2="1211.5" y2="400.16999999999996" stroke="#800080" stroke-width="1.3" />
<line x1="1207.5" y1="391.96" x2="1215.5" y2="391.96" stroke="#800080" stroke-width="1.3" />
<text x="1221" y="593.8" font-size="12.48" fill="#800080" textLength="7.6" lengthAdjust="spacingAndGlyphs" >0</text>
<text x="1221" y="560.9599999999999" font-size="12.48" fill="#800080" textLength="7.6" lengthAdjust="spacingAndGlyphs" >2</text>
<text x="1221" y="528.1199999999999" font-size="12.48" fill="#800080" textLength="7.6" lengthAdjust="spacingAndGlyphs" >4</text>
<text x="1221" y="495.28000000000003" font-size="12.48" fill="#800080" textLength="7.6" lengthAdjust="spacingAndGlyphs" >6</text>
<text x="1221" y="462.44" font-size="12.48" fill="#800080" textLength="7.6" lengthAdjust="spacingAndGlyphs" >8</text>
<text x="1221" y="429.59999999999997" font-size="12.48" fill="#800080" textLength="15.3" lengthAdjust="spacingAndGlyphs" >10</text>
<text x="1221" y="396.76" font-size="12.48" fill="#800080" textLength="15.3" lengthAdjust="spacingAndGlyphs" >12</text>
<line x1="869" y1="382.5" x2="1200" y2="382.5" stroke="#000" stroke-width="1.3" />
<line x1="886.13" y1="382.5" x2="886.13" y2="378.5" stroke="#000" stroke-width="1.3" />
<line x1="903.22" y1="382.5" x2="903.22" y2="378.5" stroke="#000" stroke-width="1.3" />
<line x1="920.31" y1="382.5" x2="920.31" y2="378.5" stroke="#000" stroke-width="1.3" />
<line x1="937.4" y1="382.5" x2="937.4" y2="374.5" stroke="#000" stroke-width="1.3" />
<line x1="954.49" y1="382.5" x2="954.49" y2="378.5" stroke="#000" stroke-width="1.3" />
<line x1="971.5799999999999" y1="382.5" x2="971.5799999999999" y2="378.5" stroke="#000" stroke-width="1.3" />
<line x1="988.67" y1="382.5" x2="988.67" y2="378.5" stroke="#000" stroke-width="1.3" />
<line x1="1005.76" y1="382.5" x2="1005.76" y2="374.5" stroke="#000" stroke-width="1.3" />
<line x1="1022.85" y1="382.5" x2="1022.85" y2="378.5" stroke="#000" stroke-width="1.3" />
<line x1="1039.94" y1="382.5" x2="1039.94" y2="378.5" stroke="#000" stroke-width="1.3" />
<line x1="1057.03" y1="382.5" x2="1057.03" y2="378.5" stroke="#000" stroke-width="1.3" />
<line x1="1074.12" y1="382.5" x2="1074.12" y2="374.5" stroke="#000" stroke-width="1.3" />
<line x1="1091.21" y1="382.5" x2="1091.21" y2="378.5" stroke="#000" stroke-width="1.3" />
<line x1="1108.3" y1="382.5" x2="1108.3" y2="378.5" stroke="#000" stroke-width="1.3" />
<line x1="1125.3899999999999" y1="382.5" x2="1125.3899999999999" y2="378.5" stroke="#000" stroke-width="1.3" />
<line x1="1142.48" y1="382.5" x2="1142.48" y2="374.5" stroke="#000" stroke-width="1.3" />
<line x1="1159.57" y1="382.5" x2="1159.57" y2="378.5" stroke="#000" stroke-width="1.3" />
<line x1="1176.6599999999999" y1="382.5" x2="1176.6599999999999" y2="378.5" stroke="#000" stroke-width="1.3" />
<line x1="1193.75" y1="382.5" x2="1193.75" y2="378.5" stroke="#000" stroke-width="1.3" />
<text x="937.4" y="369" font-size="12.48" text-anchor="middle" fill="#000" textLength="7.6" lengthAdjust="spacingAndGlyphs" >3</text>
<text x="1005" y="369" font-size="12.48" text-anchor="middle" fill="#000" textLength="7.6" lengthAdjust="spacingAndGlyphs" >7</text>
<text x="1073.4" y="369" font-size="12.48" text-anchor="middle" fill="#000" textLength="15.3" lengthAdjust="spacingAndGlyphs" >10</text>
<text x="1141.7" y="369" font-size="12.48" text-anchor="middle" fill="#000" textLength="15.3" lengthAdjust="spacingAndGlyphs" >13</text>
<text stroke="#000" stroke-width="0.45" x="1034" y="353.5" font-size="16.64" font-weight="700" text-anchor="middle" fill="#000" textLength="97.7" lengthAdjust="spacingAndGlyphs" >Time (min)</text>
<line x1="869" y1="598.3" x2="1200" y2="598.3" stroke="#000" stroke-width="1.3" />
<line x1="886.2750000000001" y1="598.3" x2="886.2750000000001" y2="602.3" stroke="#000" stroke-width="1.3" />
<line x1="903.35" y1="598.3" x2="903.35" y2="602.3" stroke="#000" stroke-width="1.3" />
<line x1="920.4250000000001" y1="598.3" x2="920.4250000000001" y2="602.3" stroke="#000" stroke-width="1.3" />
<line x1="937.5" y1="598.3" x2="937.5" y2="606.3" stroke="#000" stroke-width="1.3" />
<line x1="954.575" y1="598.3" x2="954.575" y2="602.3" stroke="#000" stroke-width="1.3" />
<line x1="971.6500000000001" y1="598.3" x2="971.6500000000001" y2="602.3" stroke="#000" stroke-width="1.3" />
<line x1="988.725" y1="598.3" x2="988.725" y2="602.3" stroke="#000" stroke-width="1.3" />
<line x1="1005.8000000000001" y1="598.3" x2="1005.8000000000001" y2="606.3" stroke="#000" stroke-width="1.3" />
<line x1="1022.875" y1="598.3" x2="1022.875" y2="602.3" stroke="#000" stroke-width="1.3" />
<line x1="1039.95" y1="598.3" x2="1039.95" y2="602.3" stroke="#000" stroke-width="1.3" />
<line x1="1057.025" y1="598.3" x2="1057.025" y2="602.3" stroke="#000" stroke-width="1.3" />
<line x1="1074.1000000000001" y1="598.3" x2="1074.1000000000001" y2="606.3" stroke="#000" stroke-width="1.3" />
<line x1="1091.1750000000002" y1="598.3" x2="1091.1750000000002" y2="602.3" stroke="#000" stroke-width="1.3" />
<line x1="1108.25" y1="598.3" x2="1108.25" y2="602.3" stroke="#000" stroke-width="1.3" />
<line x1="1125.325" y1="598.3" x2="1125.325" y2="602.3" stroke="#000" stroke-width="1.3" />
<line x1="1142.4" y1="598.3" x2="1142.4" y2="606.3" stroke="#000" stroke-width="1.3" />
<line x1="1159.4750000000001" y1="598.3" x2="1159.4750000000001" y2="602.3" stroke="#000" stroke-width="1.3" />
<line x1="1176.5500000000002" y1="598.3" x2="1176.5500000000002" y2="602.3" stroke="#000" stroke-width="1.3" />
<line x1="1193.625" y1="598.3" x2="1193.625" y2="602.3" stroke="#000" stroke-width="1.3" />
<text x="937.5" y="620.8" font-size="12.48" text-anchor="middle" fill="#000" textLength="22.9" lengthAdjust="spacingAndGlyphs" >200</text>
<text stroke="#000" stroke-width="0.45" x="1034" y="637.8" font-size="16.64" font-weight="700" text-anchor="middle" fill="#000" textLength="133.0" lengthAdjust="spacingAndGlyphs" >Image Number</text>
<text stroke="#000" stroke-width="0.45" x="818.3" y="491" font-size="16.64" font-weight="700" text-anchor="middle" fill="#000" textLength="127.0" lengthAdjust="spacingAndGlyphs" transform="rotate(-90 818.3 491)" >Completeness</text>
<text stroke="#800080" stroke-width="0.45" x="1242" y="490.5" font-size="16.64" font-weight="700" text-anchor="middle" fill="#800080" textLength="111.0" lengthAdjust="spacingAndGlyphs" transform="rotate(90 1242 490.5)" >Redundancy</text>
<line x1="953.5" y1="387" x2="953.5" y2="595" stroke="#000" stroke-width="1" stroke-dasharray="4 2.5"/>
<line x1="1044.5" y1="387" x2="1044.5" y2="595" stroke="#000" stroke-width="1" stroke-dasharray="4 2.5"/>
<line x1="1135.3" y1="387" x2="1135.3" y2="595" stroke="#000" stroke-width="1" stroke-dasharray="4 2.5"/>
<line x1="1199.5" y1="387" x2="1199.5" y2="595" stroke="#000" stroke-width="1" stroke-dasharray="4 2.5"/>
<polyline points="869.2,589.0 869.5,586.8 869.9,584.7 870.2,582.5 870.6,580.4 870.9,578.3 871.2,576.2 871.6,574.1 871.9,572.0 872.3,570.0 872.6,567.9 873.0,565.9 873.3,563.9 873.6,561.9 874.0,559.9 874.3,557.9 874.7,555.9 875.0,553.9 875.3,552.0 875.7,550.1 876.0,548.1 876.4,546.2 876.7,544.3 877.1,542.5 877.4,540.6 877.7,538.7 878.1,536.9 878.4,535.0 878.8,533.2 879.1,531.4 879.4,529.6 879.8,527.8 880.1,526.1 880.5,524.3 880.8,522.6 881.2,520.8 881.5,519.1 881.8,517.4 882.2,515.7 882.5,514.1 882.9,512.4 883.2,510.7 883.5,509.1 883.9,507.5 884.2,505.8 884.6,504.2 884.9,502.6 885.3,501.1 885.6,499.5 885.9,497.9 886.3,496.4 886.6,494.9 887.0,493.3 887.3,491.8 887.6,490.3 888.0,488.8 888.3,487.4 888.7,485.9 889.0,484.5 889.3,483.0 889.7,481.6 890.0,480.2 890.4,478.8 890.7,477.4 891.1,476.0 891.4,474.7 891.7,473.3 892.1,472.0 892.4,470.7 892.8,469.4 893.1,468.1 893.4,466.8 893.8,465.5 894.1,464.2 894.5,463.0 894.8,461.7 895.2,460.5 895.5,459.3 895.8,458.1 896.2,456.9 896.5,455.7 896.9,454.5 897.2,453.4 897.5,452.2 897.9,451.1 898.2,450.0 898.6,448.8 898.9,447.7 899.3,446.7 899.6,445.6 899.9,444.5 900.3,443.5 900.6,442.4 901.0,441.4 901.3,440.4 901.6,439.4 902.0,438.4 902.3,437.4 902.7,436.4 903.0,435.4 903.4,434.5 903.7,433.5 904.0,432.6 904.4,431.7 904.7,430.8 905.1,429.9 905.4,429.0 905.7,428.1 906.1,427.3 906.4,426.4 906.8,425.6 907.1,424.8 907.4,423.9 907.8,423.1 908.1,422.3 908.5,421.6 908.8,420.8 909.2,420.0 909.5,419.3 909.8,418.5 910.2,417.8 910.5,417.1 910.9,416.4 911.2,415.7 911.5,415.0 911.9,414.3 912.2,413.7 912.6,413.0 912.9,412.4 913.3,411.7 913.6,411.1 913.9,410.5 914.3,409.9 914.6,409.3 915.0,408.7 915.3,408.2 915.6,407.6 916.0,407.1 916.3,406.5 916.7,406.0 917.0,405.5 917.4,405.0 917.7,404.5 918.0,404.0 918.4,403.5 918.7,403.0 919.1,402.6 919.4,402.1 919.7,401.7 920.1,401.3 920.4,400.9 920.8,400.4 921.1,400.1 921.4,399.7 921.8,399.3 922.1,398.9 922.5,398.6 922.8,398.2 923.2,397.9 923.5,397.5 923.8,397.2 924.2,396.9 924.5,396.6 924.9,396.3 925.2,396.0 925.5,395.8 925.9,395.5 926.2,395.3 926.6,395.0 926.9,394.8 927.3,394.5 927.6,394.3 927.9,394.1 928.3,393.9 928.6,393.7 929.0,393.5 929.3,393.4 929.6,393.2 930.0,393.0 930.3,392.9 930.7,392.7 931.0,392.6 931.4,392.5 931.7,392.4 932.0,392.3 932.4,392.2 932.7,392.1 933.1,392.0 933.4,391.9 933.7,391.8 934.1,391.8 934.4,391.7 934.8,391.7 935.1,391.6 935.5,391.6 935.8,391.6 936.1,391.5 936.5,391.5 936.8,391.5 937.2,391.5 937.5,391.5 1200.0,391.5" fill="none" stroke="#3c3c3c" stroke-width="1.6"/>
<line x1="869.2" y1="589" x2="1200" y2="424" stroke="#7a2a8a" stroke-width="1.5" />
<text x="912" y="585.6" font-size="12.48" fill="#000" textLength="40.6" lengthAdjust="spacingAndGlyphs" >Scan 1</text>
<text x="1128" y="441.5" font-size="12.48" text-anchor="middle" fill="#111" textLength="120.2" lengthAdjust="spacingAndGlyphs" >Image Number: 726</text>
<text x="1128" y="455.1" font-size="12.48" text-anchor="middle" fill="#111" textLength="138.9" lengthAdjust="spacingAndGlyphs" >Completeness: 100.0%</text>
<text x="1128" y="468.7" font-size="12.48" text-anchor="middle" fill="#111" textLength="108.0" lengthAdjust="spacingAndGlyphs" >Redundancy: 7.54</text>
<text x="1128" y="482.3" font-size="12.48" text-anchor="middle" fill="#111" textLength="99.8" lengthAdjust="spacingAndGlyphs" >Time (min): 12.1</text>
<rect x="414" y="669.5" width="315" height="254.5" fill="#ece9e4" />
<rect x="414" y="669.5" width="315" height="1.6" fill="#aaa6a0" />
<rect x="414" y="669.5" width="1.8" height="254.5" fill="#aaa6a0" />
<rect x="727.2" y="669.5" width="1.8" height="255.5" fill="#ffffff" />
<rect x="414" y="922.2" width="315" height="1.8" fill="#ffffff" />
<line x1="410.5" y1="673.5" x2="410.5" y2="917.8" stroke="#000" stroke-width="1.3" />
<line x1="410.5" y1="917.2" x2="402.5" y2="917.2" stroke="#000" stroke-width="1.3" />
<line x1="410.5" y1="909.1" x2="406.5" y2="909.1" stroke="#000" stroke-width="1.3" />
<line x1="410.5" y1="901.0" x2="406.5" y2="901.0" stroke="#000" stroke-width="1.3" />
<line x1="410.5" y1="892.9000000000001" x2="406.5" y2="892.9000000000001" stroke="#000" stroke-width="1.3" />
<line x1="410.5" y1="884.8000000000001" x2="406.5" y2="884.8000000000001" stroke="#000" stroke-width="1.3" />
<line x1="410.5" y1="876.7" x2="402.5" y2="876.7" stroke="#000" stroke-width="1.3" />
<line x1="410.5" y1="868.6" x2="406.5" y2="868.6" stroke="#000" stroke-width="1.3" />
<line x1="410.5" y1="860.5" x2="406.5" y2="860.5" stroke="#000" stroke-width="1.3" />
<line x1="410.5" y1="852.4000000000001" x2="406.5" y2="852.4000000000001" stroke="#000" stroke-width="1.3" />
<line x1="410.5" y1="844.3000000000001" x2="406.5" y2="844.3000000000001" stroke="#000" stroke-width="1.3" />
<line x1="410.5" y1="836.2" x2="402.5" y2="836.2" stroke="#000" stroke-width="1.3" />
<line x1="410.5" y1="828.1" x2="406.5" y2="828.1" stroke="#000" stroke-width="1.3" />
<line x1="410.5" y1="820.0" x2="406.5" y2="820.0" stroke="#000" stroke-width="1.3" />
<line x1="410.5" y1="811.9000000000001" x2="406.5" y2="811.9000000000001" stroke="#000" stroke-width="1.3" />
<line x1="410.5" y1="803.8000000000001" x2="406.5" y2="803.8000000000001" stroke="#000" stroke-width="1.3" />
<line x1="410.5" y1="795.7" x2="402.5" y2="795.7" stroke="#000" stroke-width="1.3" />
<line x1="410.5" y1="787.6" x2="406.5" y2="787.6" stroke="#000" stroke-width="1.3" />
<line x1="410.5" y1="779.5" x2="406.5" y2="779.5" stroke="#000" stroke-width="1.3" />
<line x1="410.5" y1="771.4000000000001" x2="406.5" y2="771.4000000000001" stroke="#000" stroke-width="1.3" />
<line x1="410.5" y1="763.3000000000001" x2="406.5" y2="763.3000000000001" stroke="#000" stroke-width="1.3" />
<line x1="410.5" y1="755.2" x2="402.5" y2="755.2" stroke="#000" stroke-width="1.3" />
<line x1="410.5" y1="747.1" x2="406.5" y2="747.1" stroke="#000" stroke-width="1.3" />
<line x1="410.5" y1="739.0" x2="406.5" y2="739.0" stroke="#000" stroke-width="1.3" />
<line x1="410.5" y1="730.9000000000001" x2="406.5" y2="730.9000000000001" stroke="#000" stroke-width="1.3" />
<line x1="410.5" y1="722.8000000000001" x2="406.5" y2="722.8000000000001" stroke="#000" stroke-width="1.3" />
<line x1="410.5" y1="714.7" x2="402.5" y2="714.7" stroke="#000" stroke-width="1.3" />
<line x1="410.5" y1="706.6" x2="406.5" y2="706.6" stroke="#000" stroke-width="1.3" />
<line x1="410.5" y1="698.5" x2="406.5" y2="698.5" stroke="#000" stroke-width="1.3" />
<line x1="410.5" y1="690.4000000000001" x2="406.5" y2="690.4000000000001" stroke="#000" stroke-width="1.3" />
<line x1="410.5" y1="682.3000000000001" x2="406.5" y2="682.3000000000001" stroke="#000" stroke-width="1.3" />
<line x1="410.5" y1="674.2" x2="402.5" y2="674.2" stroke="#000" stroke-width="1.3" />
<text x="396.5" y="922.0" font-size="12.48" text-anchor="end" fill="#000" textLength="7.6" lengthAdjust="spacingAndGlyphs" >0</text>
<text x="396.5" y="881.5" font-size="12.48" text-anchor="end" fill="#000" textLength="22.9" lengthAdjust="spacingAndGlyphs" >500</text>
<text x="396.5" y="841.0" font-size="12.48" text-anchor="end" fill="#000" textLength="34.4" lengthAdjust="spacingAndGlyphs" >1,000</text>
<text x="396.5" y="800.5" font-size="12.48" text-anchor="end" fill="#000" textLength="34.4" lengthAdjust="spacingAndGlyphs" >1,500</text>
<text x="396.5" y="760.0" font-size="12.48" text-anchor="end" fill="#000" textLength="34.4" lengthAdjust="spacingAndGlyphs" >2,000</text>
<text x="396.5" y="719.5" font-size="12.48" text-anchor="end" fill="#000" textLength="34.4" lengthAdjust="spacingAndGlyphs" >2,500</text>
<text x="396.5" y="679.0" font-size="12.48" text-anchor="end" fill="#000" textLength="34.4" lengthAdjust="spacingAndGlyphs" >3,000</text>
<rect x="427" y="697" width="296" height="220.5" fill="#800080" />
<rect x="427" y="696" width="296" height="1.5" fill="#a020a0" />
<rect x="556.4" y="697" width="1.3" height="220" fill="#4a004a" />
<rect x="557.6999999999999" y="697" width="1.4" height="220" fill="#f8f0f8" />
<rect x="559.3" y="697" width="1.5" height="220" fill="#a810a8" />
<rect x="593.5" y="697" width="1.3" height="220" fill="#4a004a" />
<rect x="594.8" y="697" width="1.4" height="220" fill="#f8f0f8" />
<rect x="596.4" y="697" width="1.5" height="220" fill="#a810a8" />
<rect x="619.3" y="697" width="1.3" height="220" fill="#4a004a" />
<rect x="620.5999999999999" y="697" width="1.4" height="220" fill="#f8f0f8" />
<rect x="622.1999999999999" y="697" width="1.5" height="220" fill="#a810a8" />
<rect x="639.6" y="697" width="1.3" height="220" fill="#4a004a" />
<rect x="640.9" y="697" width="1.4" height="220" fill="#f8f0f8" />
<rect x="642.5" y="697" width="1.5" height="220" fill="#a810a8" />
<rect x="657.5" y="697" width="1.3" height="220" fill="#4a004a" />
<rect x="658.8" y="697" width="1.4" height="220" fill="#f8f0f8" />
<rect x="660.4" y="697" width="1.5" height="220" fill="#a810a8" />
<rect x="671.6" y="697" width="1.3" height="220" fill="#4a004a" />
<rect x="672.9" y="697" width="1.4" height="220" fill="#f8f0f8" />
<rect x="674.5" y="697" width="1.5" height="220" fill="#a810a8" />
<rect x="685.3" y="697" width="1.3" height="220" fill="#4a004a" />
<rect x="686.5999999999999" y="697" width="1.4" height="220" fill="#f8f0f8" />
<rect x="688.1999999999999" y="697" width="1.5" height="220" fill="#a810a8" />
<rect x="697.4" y="697" width="1.3" height="220" fill="#4a004a" />
<rect x="698.6999999999999" y="697" width="1.4" height="220" fill="#f8f0f8" />
<rect x="700.3" y="697" width="1.5" height="220" fill="#a810a8" />
<rect x="712" y="697" width="1" height="220" fill="#c040c0" />
<rect x="427" y="916" width="65.5" height="1.6" fill="#2a002a" />
<rect x="492.5" y="916" width="230" height="1.6" fill="#6a6a20" />
<rect x="731" y="670.5" width="66" height="254" fill="#ece9e4" />
<rect x="732" y="678.0" width="9" height="2.6" fill="#000" />
<text x="747.5" y="683.6" font-size="12.48" fill="#000" textLength="42.3" lengthAdjust="spacingAndGlyphs" >Unique</text>
<rect x="732" y="707.0" width="9" height="2.6" fill="#5a105a" />
<text x="747.5" y="712.6" font-size="12.48" fill="#000" textLength="47.7" lengthAdjust="spacingAndGlyphs" >Multiple</text>
<rect x="732" y="736.0" width="9" height="2.6" fill="#20708a" />
<text x="747.5" y="741.6" font-size="12.48" fill="#000" textLength="36.9" lengthAdjust="spacingAndGlyphs" >Single</text>
<rect x="732" y="765.0" width="9" height="2.6" fill="#7a7a30" />
<text x="747.5" y="770.6" font-size="12.48" fill="#000" textLength="44.8" lengthAdjust="spacingAndGlyphs" >Missing</text>
<line x1="419.4" y1="927" x2="722" y2="927" stroke="#000" stroke-width="1.3" />
<line x1="419.4" y1="927" x2="419.4" y2="935" stroke="#000" stroke-width="1.3" />
<line x1="450.66999999999996" y1="927" x2="450.66999999999996" y2="933" stroke="#000" stroke-width="1.3" />
<line x1="481.94" y1="927" x2="481.94" y2="935" stroke="#000" stroke-width="1.3" />
<line x1="513.21" y1="927" x2="513.21" y2="933" stroke="#000" stroke-width="1.3" />
<line x1="544.48" y1="927" x2="544.48" y2="935" stroke="#000" stroke-width="1.3" />
<line x1="575.75" y1="927" x2="575.75" y2="933" stroke="#000" stroke-width="1.3" />
<line x1="607.02" y1="927" x2="607.02" y2="935" stroke="#000" stroke-width="1.3" />
<line x1="638.29" y1="927" x2="638.29" y2="933" stroke="#000" stroke-width="1.3" />
<line x1="669.56" y1="927" x2="669.56" y2="935" stroke="#000" stroke-width="1.3" />
<line x1="700.8299999999999" y1="927" x2="700.8299999999999" y2="933" stroke="#000" stroke-width="1.3" />
<text x="419.4" y="948.6" font-size="12.48" text-anchor="middle" fill="#000" textLength="15.2" lengthAdjust="spacingAndGlyphs" >inf</text>
<text x="481.94" y="948.6" font-size="12.48" text-anchor="middle" fill="#000" textLength="34.4" lengthAdjust="spacingAndGlyphs" >10.00</text>
<text x="544.48" y="948.6" font-size="12.48" text-anchor="middle" fill="#000" textLength="26.7" lengthAdjust="spacingAndGlyphs" >5.00</text>
<text x="607.02" y="948.6" font-size="12.48" text-anchor="middle" fill="#000" textLength="26.7" lengthAdjust="spacingAndGlyphs" >3.33</text>
<text x="669.56" y="948.6" font-size="12.48" text-anchor="middle" fill="#000" textLength="26.7" lengthAdjust="spacingAndGlyphs" >2.50</text>
<text stroke="#000" stroke-width="0.45" x="571" y="965.4" font-size="16.64" font-weight="700" text-anchor="middle" fill="#000" textLength="44.0" lengthAdjust="spacingAndGlyphs" >d (Å)</text>
<text stroke="#000" stroke-width="0.45" x="356" y="796" font-size="16.64" font-weight="700" text-anchor="middle" fill="#000" textLength="194.3" lengthAdjust="spacingAndGlyphs" transform="rotate(-90 356 796)" >Number of Reflexions</text>
<rect x="864" y="668.5" width="341.5" height="255.0" fill="#ece9e4" />
<rect x="864" y="668.5" width="341.5" height="1.6" fill="#aaa6a0" />
<rect x="864" y="668.5" width="1.8" height="255.0" fill="#aaa6a0" />
<rect x="1203.7" y="668.5" width="1.8" height="256.0" fill="#ffffff" />
<rect x="864" y="921.7" width="341.5" height="1.8" fill="#ffffff" />
<rect x="1117" y="670" width="86.6" height="251.5" fill="#c0c0c0" />
<line x1="860.5" y1="673.5" x2="860.5" y2="917.6" stroke="#000" stroke-width="1.3" />
<line x1="860.5" y1="917.0" x2="852.5" y2="917.0" stroke="#000" stroke-width="1.3" />
<line x1="860.5" y1="904.86" x2="856.5" y2="904.86" stroke="#000" stroke-width="1.3" />
<line x1="860.5" y1="892.72" x2="854.5" y2="892.72" stroke="#000" stroke-width="1.3" />
<line x1="860.5" y1="880.58" x2="856.5" y2="880.58" stroke="#000" stroke-width="1.3" />
<line x1="860.5" y1="868.44" x2="852.5" y2="868.44" stroke="#000" stroke-width="1.3" />
<line x1="860.5" y1="856.3" x2="856.5" y2="856.3" stroke="#000" stroke-width="1.3" />
<line x1="860.5" y1="844.16" x2="854.5" y2="844.16" stroke="#000" stroke-width="1.3" />
<line x1="860.5" y1="832.02" x2="856.5" y2="832.02" stroke="#000" stroke-width="1.3" />
<line x1="860.5" y1="819.88" x2="852.5" y2="819.88" stroke="#000" stroke-width="1.3" />
<line x1="860.5" y1="807.74" x2="856.5" y2="807.74" stroke="#000" stroke-width="1.3" />
<line x1="860.5" y1="795.6" x2="854.5" y2="795.6" stroke="#000" stroke-width="1.3" />
<line x1="860.5" y1="783.46" x2="856.5" y2="783.46" stroke="#000" stroke-width="1.3" />
<line x1="860.5" y1="771.3199999999999" x2="852.5" y2="771.3199999999999" stroke="#000" stroke-width="1.3" />
<line x1="860.5" y1="759.1800000000001" x2="856.5" y2="759.1800000000001" stroke="#000" stroke-width="1.3" />
<line x1="860.5" y1="747.04" x2="854.5" y2="747.04" stroke="#000" stroke-width="1.3" />
<line x1="860.5" y1="734.9" x2="856.5" y2="734.9" stroke="#000" stroke-width="1.3" />
<line x1="860.5" y1="722.76" x2="852.5" y2="722.76" stroke="#000" stroke-width="1.3" />
<line x1="860.5" y1="710.62" x2="856.5" y2="710.62" stroke="#000" stroke-width="1.3" />
<line x1="860.5" y1="698.48" x2="854.5" y2="698.48" stroke="#000" stroke-width="1.3" />
<line x1="860.5" y1="686.34" x2="856.5" y2="686.34" stroke="#000" stroke-width="1.3" />
<line x1="860.5" y1="674.2" x2="852.5" y2="674.2" stroke="#000" stroke-width="1.3" />
<text x="846.5" y="921.8" font-size="12.48" text-anchor="end" fill="#000" textLength="7.6" lengthAdjust="spacingAndGlyphs" >0</text>
<text x="846.5" y="873.24" font-size="12.48" text-anchor="end" fill="#000" textLength="15.3" lengthAdjust="spacingAndGlyphs" >20</text>
<text x="846.5" y="824.68" font-size="12.48" text-anchor="end" fill="#000" textLength="15.3" lengthAdjust="spacingAndGlyphs" >40</text>
<text x="846.5" y="776.1199999999999" font-size="12.48" text-anchor="end" fill="#000" textLength="15.3" lengthAdjust="spacingAndGlyphs" >60</text>
<text x="846.5" y="727.56" font-size="12.48" text-anchor="end" fill="#000" textLength="15.3" lengthAdjust="spacingAndGlyphs" >80</text>
<text x="846.5" y="679.0" font-size="12.48" text-anchor="end" fill="#000" textLength="22.9" lengthAdjust="spacingAndGlyphs" >100</text>
<line x1="1208.5" y1="673.7" x2="1208.5" y2="918.8" stroke="#800080" stroke-width="1.3" />
<line x1="1208.5" y1="674.3" x2="1216.5" y2="674.3" stroke="#800080" stroke-width="1.3" />
<line x1="1208.5" y1="686.51" x2="1212.5" y2="686.51" stroke="#800080" stroke-width="1.3" />
<line x1="1208.5" y1="698.7199999999999" x2="1214.5" y2="698.7199999999999" stroke="#800080" stroke-width="1.3" />
<line x1="1208.5" y1="710.93" x2="1212.5" y2="710.93" stroke="#800080" stroke-width="1.3" />
<line x1="1208.5" y1="723.14" x2="1216.5" y2="723.14" stroke="#800080" stroke-width="1.3" />
<line x1="1208.5" y1="735.3499999999999" x2="1212.5" y2="735.3499999999999" stroke="#800080" stroke-width="1.3" />
<line x1="1208.5" y1="747.56" x2="1214.5" y2="747.56" stroke="#800080" stroke-width="1.3" />
<line x1="1208.5" y1="759.77" x2="1212.5" y2="759.77" stroke="#800080" stroke-width="1.3" />
<line x1="1208.5" y1="771.98" x2="1216.5" y2="771.98" stroke="#800080" stroke-width="1.3" />
<line x1="1208.5" y1="784.1899999999999" x2="1212.5" y2="784.1899999999999" stroke="#800080" stroke-width="1.3" />
<line x1="1208.5" y1="796.4" x2="1214.5" y2="796.4" stroke="#800080" stroke-width="1.3" />
<line x1="1208.5" y1="808.6099999999999" x2="1212.5" y2="808.6099999999999" stroke="#800080" stroke-width="1.3" />
<line x1="1208.5" y1="820.8199999999999" x2="1216.5" y2="820.8199999999999" stroke="#800080" stroke-width="1.3" />
<line x1="1208.5" y1="833.03" x2="1212.5" y2="833.03" stroke="#800080" stroke-width="1.3" />
<line x1="1208.5" y1="845.24" x2="1214.5" y2="845.24" stroke="#800080" stroke-width="1.3" />
<line x1="1208.5" y1="857.4499999999999" x2="1212.5" y2="857.4499999999999" stroke="#800080" stroke-width="1.3" />
<line x1="1208.5" y1="869.66" x2="1216.5" y2="869.66" stroke="#800080" stroke-width="1.3" />
<line x1="1208.5" y1="881.87" x2="1212.5" y2="881.87" stroke="#800080" stroke-width="1.3" />
<line x1="1208.5" y1="894.0799999999999" x2="1214.5" y2="894.0799999999999" stroke="#800080" stroke-width="1.3" />
<line x1="1208.5" y1="906.29" x2="1212.5" y2="906.29" stroke="#800080" stroke-width="1.3" />
<line x1="1208.5" y1="918.5" x2="1216.5" y2="918.5" stroke="#800080" stroke-width="1.3" />
<text x="1221" y="679.0999999999999" font-size="12.48" fill="#800080" textLength="7.6" lengthAdjust="spacingAndGlyphs" >0</text>
<text x="1221" y="727.9399999999999" font-size="12.48" fill="#800080" textLength="7.6" lengthAdjust="spacingAndGlyphs" >4</text>
<text x="1221" y="776.78" font-size="12.48" fill="#800080" textLength="7.6" lengthAdjust="spacingAndGlyphs" >8</text>
<text x="1221" y="825.6199999999999" font-size="12.48" fill="#800080" textLength="15.3" lengthAdjust="spacingAndGlyphs" >12</text>
<text x="1221" y="874.4599999999999" font-size="12.48" fill="#800080" textLength="15.3" lengthAdjust="spacingAndGlyphs" >16</text>
<text x="1221" y="923.3" font-size="12.48" fill="#800080" textLength="15.3" lengthAdjust="spacingAndGlyphs" >20</text>
<line x1="870" y1="926.3" x2="1198" y2="926.3" stroke="#000" stroke-width="1.3" />
<line x1="886.2750000000001" y1="926.3" x2="886.2750000000001" y2="930.3" stroke="#000" stroke-width="1.3" />
<line x1="903.35" y1="926.3" x2="903.35" y2="932.3" stroke="#000" stroke-width="1.3" />
<line x1="920.4250000000001" y1="926.3" x2="920.4250000000001" y2="930.3" stroke="#000" stroke-width="1.3" />
<line x1="937.5" y1="926.3" x2="937.5" y2="934.3" stroke="#000" stroke-width="1.3" />
<line x1="954.575" y1="926.3" x2="954.575" y2="930.3" stroke="#000" stroke-width="1.3" />
<line x1="971.6500000000001" y1="926.3" x2="971.6500000000001" y2="932.3" stroke="#000" stroke-width="1.3" />
<line x1="988.725" y1="926.3" x2="988.725" y2="930.3" stroke="#000" stroke-width="1.3" />
<line x1="1005.8000000000001" y1="926.3" x2="1005.8000000000001" y2="934.3" stroke="#000" stroke-width="1.3" />
<line x1="1022.875" y1="926.3" x2="1022.875" y2="930.3" stroke="#000" stroke-width="1.3" />
<line x1="1039.95" y1="926.3" x2="1039.95" y2="932.3" stroke="#000" stroke-width="1.3" />
<line x1="1057.025" y1="926.3" x2="1057.025" y2="930.3" stroke="#000" stroke-width="1.3" />
<line x1="1074.1000000000001" y1="926.3" x2="1074.1000000000001" y2="934.3" stroke="#000" stroke-width="1.3" />
<line x1="1091.1750000000002" y1="926.3" x2="1091.1750000000002" y2="930.3" stroke="#000" stroke-width="1.3" />
<line x1="1108.25" y1="926.3" x2="1108.25" y2="932.3" stroke="#000" stroke-width="1.3" />
<line x1="1125.325" y1="926.3" x2="1125.325" y2="930.3" stroke="#000" stroke-width="1.3" />
<line x1="1142.4" y1="926.3" x2="1142.4" y2="934.3" stroke="#000" stroke-width="1.3" />
<line x1="1159.4750000000001" y1="926.3" x2="1159.4750000000001" y2="930.3" stroke="#000" stroke-width="1.3" />
<line x1="1176.5500000000002" y1="926.3" x2="1176.5500000000002" y2="932.3" stroke="#000" stroke-width="1.3" />
<line x1="1193.625" y1="926.3" x2="1193.625" y2="930.3" stroke="#000" stroke-width="1.3" />
<text x="937.5" y="948.6" font-size="12.48" text-anchor="middle" fill="#000" textLength="22.9" lengthAdjust="spacingAndGlyphs" >200</text>
<text x="1005.8000000000001" y="948.6" font-size="12.48" text-anchor="middle" fill="#000" textLength="22.9" lengthAdjust="spacingAndGlyphs" >400</text>
<text x="1074.1000000000001" y="948.6" font-size="12.48" text-anchor="middle" fill="#000" textLength="22.9" lengthAdjust="spacingAndGlyphs" >600</text>
<text x="1142.4" y="948.6" font-size="12.48" text-anchor="middle" fill="#000" textLength="22.9" lengthAdjust="spacingAndGlyphs" >800</text>
<text stroke="#000" stroke-width="0.45" x="1034" y="965.4" font-size="16.64" font-weight="700" text-anchor="middle" fill="#000" textLength="133.0" lengthAdjust="spacingAndGlyphs" >Image Number</text>
<text stroke="#000" stroke-width="0.45" x="818.3" y="794.4" font-size="16.64" font-weight="700" text-anchor="middle" fill="#000" textLength="92.1" lengthAdjust="spacingAndGlyphs" transform="rotate(-90 818.3 794.4)" >% Overlap</text>
<text stroke="#800080" stroke-width="0.45" x="1242" y="795.3" font-size="16.64" font-weight="700" text-anchor="middle" fill="#800080" textLength="180.8" lengthAdjust="spacingAndGlyphs" transform="rotate(90 1242 795.3)" >Number of Overlaps</text>
<line x1="869" y1="674.2" x2="1199" y2="674.2" stroke="#8a3a9a" stroke-width="1.6" />
<line x1="869" y1="917" x2="1198" y2="917" stroke="#3c3c3c" stroke-width="1.6" />
<line x1="898" y1="674" x2="898" y2="686" stroke="#7a108a" stroke-width="1.5" />
<line x1="908.5" y1="674" x2="908.5" y2="686" stroke="#7a108a" stroke-width="1.5" />
<line x1="915" y1="674" x2="915" y2="686" stroke="#7a108a" stroke-width="1.5" />
<line x1="1049" y1="674" x2="1049" y2="685" stroke="#7a108a" stroke-width="1.5" />
<line x1="1052" y1="674" x2="1052" y2="685" stroke="#7a108a" stroke-width="1.5" />
<line x1="1055" y1="674" x2="1055" y2="685" stroke="#7a108a" stroke-width="1.5" />
<line x1="1057" y1="674" x2="1057" y2="686" stroke="#7a108a" stroke-width="1.5" />
<line x1="1059" y1="674" x2="1059" y2="686" stroke="#7a108a" stroke-width="1.5" />
<line x1="1060.5" y1="674" x2="1060.5" y2="697" stroke="#7a108a" stroke-width="1.5" />
<line x1="1062" y1="674" x2="1062" y2="686" stroke="#7a108a" stroke-width="1.5" />
<line x1="1064" y1="674" x2="1064" y2="686" stroke="#7a108a" stroke-width="1.5" />
<line x1="1143" y1="674" x2="1143" y2="686" stroke="#7a108a" stroke-width="1.5" />
<line x1="1145" y1="674" x2="1145" y2="686" stroke="#7a108a" stroke-width="1.5" />
<line x1="1147" y1="674" x2="1147" y2="686" stroke="#7a108a" stroke-width="1.5" />
<rect x="1035.5" y="981.5" width="11" height="11" fill="#ffffff" stroke="#9f9a92" stroke-width="1" rx="1" />
<path d="M1037.5 987 L1040 990 L1045 983" fill="none" stroke="#000" stroke-width="2"/>
<text x="1052.5" y="990.5" font-size="12.48" fill="#000" textLength="199.1" lengthAdjust="spacingAndGlyphs" >Show number of overlaps on plot</text>
<rect x="1066.5" y="1014.5" width="122" height="43" fill="none" stroke="#d3cfc8" stroke-width="1" />
<rect x="1067.5" y="1015.5" width="122" height="43" fill="none" stroke="#ffffff" stroke-width="1" />
<rect x="1075.5" y="1025.5" width="104" height="22" fill="url(#gBtnDis)" stroke="#bdb8b0" stroke-width="1" rx="3" />
<line x1="1077" y1="1026.5" x2="1178" y2="1026.5" stroke="#ffffff" stroke-width="1" />
<text x="1127.5" y="1040.5" font-size="12.48" text-anchor="middle" fill="#8a877f" textLength="96.3" lengthAdjust="spacingAndGlyphs" >Stop calculation</text>
<line x1="1262" y1="1062" x2="1276" y2="1048" stroke="#bdb8b0" stroke-width="1" />
<line x1="1266" y1="1062" x2="1276" y2="1052" stroke="#bdb8b0" stroke-width="1" />
<line x1="1270" y1="1062" x2="1276" y2="1056" stroke="#bdb8b0" stroke-width="1" />
<rect x="683" y="232" width="280" height="30" fill="#fde84e" />
<text x="688" y="255.2" font-size="20.00" font-weight="700" fill="#e4621c" textLength="265" lengthAdjust="spacingAndGlyphs" >frames that will be copied</text>
<rect x="773" y="307" width="162" height="24.5" fill="#fde84e" />
<text x="778.4" y="326.7" font-size="20.00" font-weight="700" fill="#e4621c" textLength="151" lengthAdjust="spacingAndGlyphs" >unused frames</text>
<rect x="966" y="566" width="264.5" height="61" fill="#fde84e" />
<text x="970" y="588.7" font-size="20.00" font-weight="700" fill="#e4621c" textLength="210" lengthAdjust="spacingAndGlyphs" >Move with mouse to</text>
<text x="970" y="617" font-size="20.00" font-weight="700" fill="#e4621c" textLength="251.5" lengthAdjust="spacingAndGlyphs" >adjust number of frames</text>
<path d="M1118.5 531.5 L1072 529.5" stroke="#e85a1c" stroke-width="5" stroke-linecap="round" fill="none"/>
<path d="M1055 530.5 L1073 523.5 L1071 538.5 Z" fill="#e85a1c" stroke="#e85a1c" stroke-width="3" stroke-linejoin="round"/>
<path d="M1117 546.5 L1160 546.5" stroke="#e85a1c" stroke-width="5" stroke-linecap="round" fill="none"/>
<path d="M1171.5 547 L1155 540.5 L1156 553.5 Z" fill="#e85a1c" stroke="#e85a1c" stroke-width="3" stroke-linejoin="round"/>
</svg>
</body></html>
